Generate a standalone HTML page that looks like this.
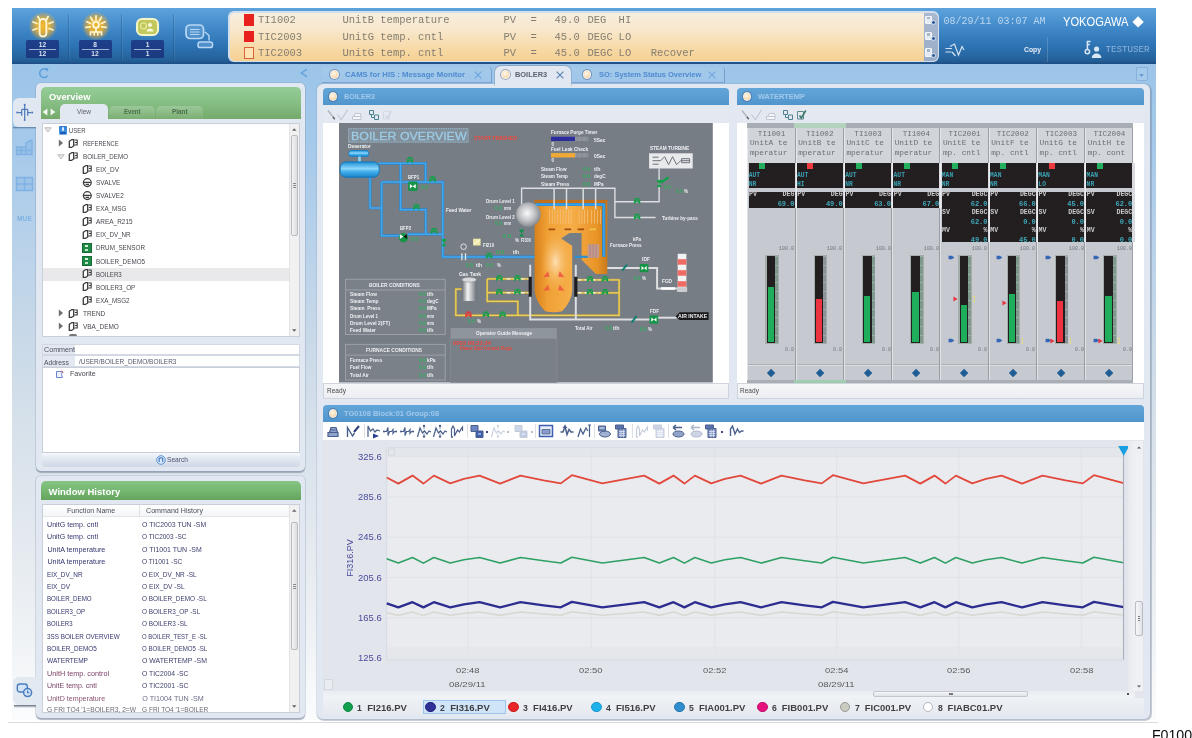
<!DOCTYPE html>
<html lang="en"><head><meta charset="utf-8"><title>CENTUM VP HIS</title>
<style>
html,body{margin:0;padding:0;background:#fff;}
#app{will-change:transform;position:relative;width:1192px;height:738px;overflow:hidden;background:#fff;font-family:"Liberation Sans",sans-serif;}
#app div,#app span.t,#app svg{position:absolute;box-sizing:border-box;}
#shot{left:0;top:0;width:1192px;height:738px;}
#app span.t{white-space:pre;transform-origin:0 50%;}
.s{font-family:"Liberation Sans",sans-serif;}
.sb{font-family:"Liberation Sans",sans-serif;font-weight:bold;}
.m{font-family:"Liberation Mono",monospace;}
.mb{font-family:"Liberation Mono",monospace;font-weight:bold;}
.r{font-family:"Liberation Serif",serif;}
.rb{font-family:"Liberation Serif",serif;font-weight:bold;}
</style></head>
<body><div id="app">
<div id="shot">
<!-- p1_frame -->
<div style="left:12px;top:63px;width:1144px;height:657px;background:linear-gradient(#9cc5e9 0%,#a5c9ea 12%,#b9d2ea 28%,#c9d9e8 42%,#d8e2eb 57%,#e3e9ef 72%,#eff2f5 87%,#fbfcfd 100%);"></div>
<div style="left:12px;top:8px;width:1144px;height:55.5px;background:linear-gradient(#5ea3dc 0%,#4189c9 35%,#2f75b5 65%,#26659f 88%,#225a92 96%,#1d4c80 100%);"></div>
<!-- p2_header -->
<div style="left:68px;top:14px;width:1px;height:46px;background:rgba(20,60,110,.28);"></div>
<div style="left:69px;top:14px;width:1px;height:46px;background:rgba(255,255,255,.07);"></div>
<div style="left:120.5px;top:14px;width:1px;height:46px;background:rgba(20,60,110,.28);"></div>
<div style="left:121.5px;top:14px;width:1px;height:46px;background:rgba(255,255,255,.07);"></div>
<div style="left:173px;top:14px;width:1px;height:46px;background:rgba(20,60,110,.28);"></div>
<div style="left:174px;top:14px;width:1px;height:46px;background:rgba(255,255,255,.07);"></div>
<div style="left:29px;top:12px;width:28px;height:28px;background:radial-gradient(circle,rgba(250,190,40,.95) 0%,rgba(245,178,35,.85) 35%,rgba(235,170,50,.4) 58%,rgba(235,170,50,0) 74%);border-radius:50%;"></div><svg style="left:28px;top:10.5px" width="30" height="30" viewBox="-15 -15 30 30"><path d="M-6.1 -2.5L-10.0 -4.0M-3.1 -5.8L-5.1 -9.5M3.1 -5.8L5.1 -9.5M6.1 -2.5L10.0 -4.0M6.1 2.5L10.0 4.0M-6.1 2.5L-10.0 4.0" stroke="#fff3c4" stroke-width="1.8" stroke-linecap="round" fill="none"/><rect x="-3.4" y="-7" width="6.8" height="17.4" rx="3.2" fill="none" stroke="#fff6d8" stroke-width="1.900"/></svg>
<div style="left:26px;top:40px;width:33px;height:18.2px;background:linear-gradient(#1e3f8a,#1b3a80);border-radius:1.5px;"></div><div style="left:29px;top:48.6px;width:27px;height:1px;background:rgba(200,215,240,.75);"></div><span class="t sb" style="left:38.83px;top:40.74px;font-size:6.6px;line-height:7.92px;color:#dbe3f5;">12</span><span class="t sb" style="left:38.83px;top:49.74px;font-size:6.6px;line-height:7.92px;color:#dbe3f5;">12</span>
<div style="left:81.5px;top:12px;width:28px;height:28px;background:radial-gradient(circle,rgba(250,190,40,.95) 0%,rgba(245,178,35,.85) 35%,rgba(235,170,50,.4) 58%,rgba(235,170,50,0) 74%);border-radius:50%;"></div><svg style="left:80.5px;top:10.5px" width="30" height="30" viewBox="-15 -15 30 30"><path d="M-5.3 -2.5L-9.2 -4.3M-3.1 -4.9L-5.4 -8.7M0.0 -5.8L0.0 -10.2M3.1 -4.9L5.4 -8.7M5.3 -2.5L9.2 -4.3M5.7 0.8L10.1 1.4M-5.7 0.8L-10.1 1.4" stroke="#fff3c4" stroke-width="1.8" stroke-linecap="round" fill="none"/><circle cx="0" cy="-1.2" r="3" fill="none" stroke="#fff6d8" stroke-width="1.8"/><path d="M-5.5 9.5V6H5.5V9.500M-1.800 9.500V6M1.800 9.500V6M0 2v3.500" fill="none" stroke="#fff6d8" stroke-width="1.6"/></svg>
<div style="left:78.5px;top:40px;width:33px;height:18.2px;background:linear-gradient(#1e3f8a,#1b3a80);border-radius:1.5px;"></div><div style="left:81.5px;top:48.6px;width:27px;height:1px;background:rgba(200,215,240,.75);"></div><span class="t sb" style="left:93.16px;top:40.74px;font-size:6.6px;line-height:7.92px;color:#dbe3f5;">8</span><span class="t sb" style="left:91.33px;top:49.74px;font-size:6.6px;line-height:7.92px;color:#dbe3f5;">12</span>
<div style="left:133.5px;top:15.5px;width:27.5px;height:22.5px;background:radial-gradient(closest-side,rgba(240,245,170,.55),rgba(240,245,170,0));"></div>
<div style="left:136px;top:17.6px;width:22.6px;height:18.2px;background:#c3c85c;border:2px solid #f3f5c9;border-radius:6px;"></div>
<svg style="left:139px;top:20px" width="17" height="14" viewBox="0 0 17 14"><circle cx="4.5" cy="6" r="3" fill="none" stroke="#e9eea0" stroke-width="1.2"/><circle cx="11" cy="5" r="2" fill="#f6f8d8"/><path d="M7.5 11.5c0-4 7-4 7 0z" fill="#f6f8d8"/></svg>
<div style="left:131px;top:40px;width:33px;height:18.2px;background:linear-gradient(#1e3f8a,#1b3a80);border-radius:1.5px;"></div><div style="left:134px;top:48.6px;width:27px;height:1px;background:rgba(200,215,240,.75);"></div><span class="t sb" style="left:145.66px;top:40.74px;font-size:6.6px;line-height:7.92px;color:#dbe3f5;">1</span><span class="t sb" style="left:145.66px;top:49.74px;font-size:6.6px;line-height:7.92px;color:#dbe3f5;">1</span>
<svg style="left:183px;top:22px" width="34" height="30" viewBox="0 0 34 30"><rect x="3" y="3" width="17.5" height="13.5" rx="4" fill="rgba(150,195,240,.25)" stroke="#b9d6f4" stroke-width="1.7"/><path d="M7 7.5h9.5M7 10h9.5M7 12.5h9.5" stroke="#b9d6f4" stroke-width="1.2"/><rect x="15" y="20" width="14.5" height="5.6" rx="2.2" fill="rgba(150,195,240,.35)" stroke="#b9d6f4" stroke-width="1.5"/><path d="M22 10l4 3.5v5" fill="none" stroke="#b9d6f4" stroke-width="1.4"/></svg>
<div style="left:228.3px;top:11.3px;width:711.2px;height:50.4px;background:#d3dfec;border-radius:6px;"></div>
<div style="left:229.5px;top:12.5px;width:694.5px;height:48px;background:linear-gradient(#f7eee0 0%,#f8e6c8 40%,#f7d9a6 75%,#f6d092 100%);border-radius:5px 0 0 5px;"></div>
<div style="left:923.6px;top:12.5px;width:14.9px;height:48px;background:linear-gradient(#a9b9cf,#9aaec8);border-radius:0 5px 5px 0;"></div>
<div style="left:244px;top:14.3px;width:10.2px;height:11.6px;background:#e8211f;"></div>
<span class="t m" style="left:258px;top:13.9px;font-size:10.5px;line-height:12.6px;color:#857e71;">TI1002</span>
<span class="t m" style="left:342.5px;top:13.9px;font-size:10.5px;line-height:12.6px;color:#857e71;">UnitB temperature</span>
<span class="t m" style="left:503.5px;top:13.9px;font-size:10.5px;line-height:12.6px;color:#857e71;">PV</span>
<span class="t m" style="left:530.5px;top:13.9px;font-size:10.5px;line-height:12.6px;color:#857e71;">=</span>
<span class="t m" style="left:554.5px;top:13.9px;font-size:10.5px;line-height:12.6px;color:#857e71;">49.0</span>
<span class="t m" style="left:587.5px;top:13.9px;font-size:10.5px;line-height:12.6px;color:#857e71;">DEG</span>
<span class="t m" style="left:618.6px;top:13.9px;font-size:10.5px;line-height:12.6px;color:#857e71;">HI</span>
<div style="left:244px;top:30.7px;width:10.2px;height:11.6px;background:#e8211f;"></div>
<span class="t m" style="left:258px;top:31.2px;font-size:10.5px;line-height:12.6px;color:#857e71;">TIC2003</span>
<span class="t m" style="left:342.5px;top:31.2px;font-size:10.5px;line-height:12.6px;color:#857e71;">UnitG temp. cntl</span>
<span class="t m" style="left:503.5px;top:31.2px;font-size:10.5px;line-height:12.6px;color:#857e71;">PV</span>
<span class="t m" style="left:530.5px;top:31.2px;font-size:10.5px;line-height:12.6px;color:#857e71;">=</span>
<span class="t m" style="left:554.5px;top:31.2px;font-size:10.5px;line-height:12.6px;color:#857e71;">45.0</span>
<span class="t m" style="left:587.5px;top:31.2px;font-size:10.5px;line-height:12.6px;color:#857e71;">DEGC</span>
<span class="t m" style="left:618.6px;top:31.2px;font-size:10.5px;line-height:12.6px;color:#857e71;">LO</span>
<div style="left:244px;top:47px;width:10.2px;height:12px;background:#fbe3b4;border:1px solid #d9613a;"></div>
<span class="t m" style="left:258px;top:46.7px;font-size:10.5px;line-height:12.6px;color:#857e71;">TIC2003</span>
<span class="t m" style="left:342.5px;top:46.7px;font-size:10.5px;line-height:12.6px;color:#857e71;">UnitG temp. cntl</span>
<span class="t m" style="left:503.5px;top:46.7px;font-size:10.5px;line-height:12.6px;color:#857e71;">PV</span>
<span class="t m" style="left:530.5px;top:46.7px;font-size:10.5px;line-height:12.6px;color:#857e71;">=</span>
<span class="t m" style="left:554.5px;top:46.7px;font-size:10.5px;line-height:12.6px;color:#857e71;">45.0</span>
<span class="t m" style="left:587.5px;top:46.7px;font-size:10.5px;line-height:12.6px;color:#857e71;">DEGC</span>
<span class="t m" style="left:618.6px;top:46.7px;font-size:10.5px;line-height:12.6px;color:#857e71;">LO</span>
<span class="t m" style="left:650.8px;top:46.7px;font-size:10.5px;line-height:12.6px;color:#857e71;">Recover</span>
<div style="left:925.4px;top:15.5px;width:6.2px;height:8.6px;background:rgba(240,244,250,.85);border:1px solid #f3f6fa;border-radius:1px;"></div>
<div style="left:926.6px;top:16.9px;width:3.6px;height:2.6px;background:rgba(120,140,170,.55);"></div>
<div style="left:931.3px;top:20.1px;width:5.2px;height:5.2px;background:#2f5f9c;border:1px solid #d5dfec;border-radius:50%;"></div>
<div style="left:925.4px;top:31.6px;width:6.2px;height:8.6px;background:rgba(240,244,250,.85);border:1px solid #f3f6fa;border-radius:1px;"></div>
<div style="left:926.6px;top:33px;width:3.6px;height:2.6px;background:rgba(120,140,170,.55);"></div>
<div style="left:931.3px;top:36.2px;width:5.2px;height:5.2px;background:#2f5f9c;border:1px solid #d5dfec;border-radius:50%;"></div>
<div style="left:925.4px;top:48px;width:6.2px;height:8.6px;background:rgba(240,244,250,.85);border:1px solid #f3f6fa;border-radius:1px;"></div>
<div style="left:926.6px;top:49.4px;width:3.6px;height:2.6px;background:rgba(120,140,170,.55);"></div>
<div style="left:931.3px;top:52.6px;width:5.2px;height:5.2px;background:#2f5f9c;border:1px solid #d5dfec;border-radius:50%;"></div>
<span class="t m" style="left:943.4px;top:15.6px;font-size:10px;line-height:12px;color:#bdd6f0;">08/29/11 03:07 AM</span>
<svg style="left:943px;top:41px" width="24" height="18" viewBox="0 0 24 18"><path d="M2.500 7.500h6.500M2.500 11h6M7 5.500l4.500-2.500 4 11 3.500-8.500 2 3.500M9 11l3.500 4" fill="none" stroke="#d3e2f3" stroke-width="1.200"/></svg>
<span class="t sb" style="left:1024px;top:45px;font-size:8px;line-height:9.6px;color:#e6eef8;transform:scaleX(0.85);">Copy</span>
<div style="left:1046.5px;top:37px;width:1px;height:25px;background:rgba(255,255,255,.16);"></div>
<span class="t s" style="left:1062.7px;top:14.76px;font-size:12.4px;line-height:14.88px;color:#fff;transform:scaleX(0.9);">YOKOGAWA</span>
<div style="left:1134.4px;top:18.3px;width:8.2px;height:8.2px;background:#fff;transform:rotate(45deg);"></div>
<svg style="left:1083px;top:40px" width="20" height="19" viewBox="0 0 20 19"><circle cx="4.4" cy="11.6" r="2.2" fill="none" stroke="#d9e6f5" stroke-width="1.5"/><path d="M4.4 9.4V1.6h3.2M4.4 4.6h2.4" fill="none" stroke="#d9e6f5" stroke-width="1.5"/><circle cx="13.6" cy="9" r="2.6" fill="#d9e6f5"/><path d="M8.8 18c0-6 9.6-6 9.6 0z" fill="#d9e6f5"/></svg>
<span class="t m" style="left:1105.5px;top:44.28px;font-size:9.2px;line-height:11.04px;color:#8db2da;">TESTUSER</span>
<!-- p3_left -->
<div style="left:13px;top:126.6px;width:23px;height:2.6px;background:linear-gradient(rgba(60,90,130,.75),rgba(70,100,140,0));"></div>
<div style="left:13.6px;top:705.4px;width:22px;height:3px;background:linear-gradient(rgba(70,80,100,.85),rgba(80,95,120,.25) 70%,rgba(90,110,140,0));"></div>
<svg style="left:38px;top:67px" width="12" height="12" viewBox="0 0 12 12"><path d="M9.6 8.6A4.3 4.3 0 1 1 8.4 2.7" fill="none" stroke="#5f9fdb" stroke-width="1.6"/><path d="M6.6 1l4 .3-1.3 3.5z" fill="#5f9fdb"/></svg>
<svg style="left:299px;top:67px" width="10" height="12" viewBox="0 0 10 12"><path d="M8 2.200L2.200 6l5.800 3.800" fill="none" stroke="#68a4de" stroke-width="1.500"/></svg>
<div style="left:35.6px;top:82.5px;width:269.8px;height:388px;background:#e2e8f1;border-radius:5px;box-shadow:0 0 0 1px rgba(120,140,170,.22),0 1.5px 1px rgba(100,112,135,.5);"></div>
<div style="left:12.6px;top:97.6px;width:26px;height:29.2px;background:#e2e8f1;border-radius:6px 0 0 6px;"></div>
<div style="left:41px;top:87px;width:259.6px;height:31.6px;background:linear-gradient(#94cd96 0%,#89c188 40%,#7db478 75%,#76aa6b 100%);border-radius:5px 5px 0 0;"></div>
<span class="t sb" style="left:48.5px;top:90.6px;font-size:9.5px;line-height:11.4px;color:#fff;transform:scaleX(0.98);">Overview</span>
<div style="left:108.5px;top:105.5px;width:46.6px;height:13.5px;background:linear-gradient(rgba(255,255,255,.2),rgba(255,255,255,.05));border-radius:5px 5px 0 0;"></div>
<div style="left:156.2px;top:105.5px;width:47.2px;height:13.5px;background:linear-gradient(rgba(255,255,255,.2),rgba(255,255,255,.05));border-radius:5px 5px 0 0;"></div>
<div style="left:60px;top:104px;width:47.6px;height:15px;background:#e2e8f1;border-radius:5px 5px 0 0;"></div>
<svg style="left:42px;top:107.8px" width="6" height="8" viewBox="0 0 6 8"><path d="M5.4 .4v7.2L.6 4z" fill="#f4faf2"/></svg>
<svg style="left:49.8px;top:107.8px" width="6" height="8" viewBox="0 0 6 8"><path d="M.6 .4v7.2L5.4 4z" fill="#f4faf2"/></svg>
<span class="t s" style="left:77px;top:107.5px;font-size:7px;line-height:8.4px;color:#5a5f6a;transform:scaleX(0.93);">View</span>
<span class="t sb" style="left:123.75px;top:107.5px;font-size:7px;line-height:8.4px;color:#3d5f3e;transform:scaleX(0.87);opacity:0.85;">Event</span>
<span class="t sb" style="left:171.75px;top:107.5px;font-size:7px;line-height:8.4px;color:#3d5f3e;transform:scaleX(0.91);opacity:0.85;">Plant</span>
<div style="left:41.6px;top:122.6px;width:258.2px;height:214.8px;background:#fff;border:1px solid #c9cfd8;"></div>
<div style="left:42.6px;top:268.4px;width:246.6px;height:12.9px;background:#e9e9eb;"></div>
<svg style="left:44px;top:127.4px" width="8" height="6" viewBox="0 0 8 6"><path d="M.8 .8h6.4L4 5z" fill="#e9e9e9" stroke="#b4b4b4" stroke-width=".9"/></svg>
<div style="left:58.7px;top:125.8px;width:8.6px;height:9.6px;background:linear-gradient(#2f7fd6,#3f8fe0 60%,#78b4ee);border-radius:1px;"></div><div style="left:61.7px;top:127px;width:2.8px;height:3.6px;background:#dfeeff;border-radius:1px;"></div><div style="left:59.7px;top:132.4px;width:6.6px;height:1.6px;background:#1d5cb0;"></div>
<span class="t s" style="left:69.4px;top:125.84px;font-size:7.6px;line-height:9.12px;color:#4b4650;transform:scaleX(0.78);">USER</span>
<svg style="left:57.6px;top:139.47px" width="6" height="8" viewBox="0 0 6 8"><path d="M.8 .6v6.8L5 4z" fill="#6e6e6e"/></svg>
<svg style="left:67.8px;top:137.67px" width="11" height="10" viewBox="0 0 11 11" preserveAspectRatio="none"><path d="M1.3 3.6l2.6-1.9h1.8v7l-2.2 1.6H1.3z" fill="#fff" stroke="#3b3b3b" stroke-width="1.300"/><path d="M6.6 2.2h2.6v5.6H6.2M7 5h2.6" fill="none" stroke="#3b3b3b" stroke-width="1.1"/></svg>
<span class="t s" style="left:82.9px;top:138.91px;font-size:7.6px;line-height:9.12px;color:#4b4650;transform:scaleX(0.76);">REFERENCE</span>
<svg style="left:56.6px;top:153.54px" width="8" height="6" viewBox="0 0 8 6"><path d="M.8 .8h6.4L4 5z" fill="#e9e9e9" stroke="#b4b4b4" stroke-width=".9"/></svg>
<svg style="left:67.8px;top:150.74px" width="11" height="10" viewBox="0 0 11 11" preserveAspectRatio="none"><path d="M1.3 3.6l2.6-1.9h1.8v7l-2.2 1.6H1.3z" fill="#fff" stroke="#3b3b3b" stroke-width="1.300"/><path d="M6.6 2.2h2.6v5.6H6.2M7 5h2.6" fill="none" stroke="#3b3b3b" stroke-width="1.1"/></svg>
<span class="t s" style="left:82.9px;top:151.98px;font-size:7.6px;line-height:9.12px;color:#4b4650;transform:scaleX(0.82);">BOILER_DEMO</span>
<svg style="left:81.5px;top:163.81px" width="11" height="10" viewBox="0 0 11 11" preserveAspectRatio="none"><path d="M1.3 3.6l2.6-1.9h1.8v7l-2.2 1.6H1.3z" fill="#fff" stroke="#3b3b3b" stroke-width="1.300"/><path d="M6.6 2.2h2.6v5.6H6.2M7 5h2.6" fill="none" stroke="#3b3b3b" stroke-width="1.1"/></svg>
<span class="t s" style="left:95.6px;top:165.05px;font-size:7.6px;line-height:9.12px;color:#4b4650;transform:scaleX(0.85);">EIX_DV</span>
<svg style="left:81.5px;top:177.08px" width="11" height="11" viewBox="0 0 11 11"><circle cx="5.3" cy="5.6" r="3.9" fill="#fff" stroke="#3b3b3b" stroke-width="1.3"/><path d="M2 5.3h6.6M3.6 7.3h3.4" stroke="#3b3b3b" stroke-width="1.2"/></svg>
<span class="t s" style="left:95.6px;top:178.12px;font-size:7.6px;line-height:9.12px;color:#4b4650;transform:scaleX(0.86);">SVALVE</span>
<svg style="left:81.5px;top:190.15px" width="11" height="11" viewBox="0 0 11 11"><circle cx="5.3" cy="5.6" r="3.9" fill="#fff" stroke="#3b3b3b" stroke-width="1.3"/><path d="M2 5.3h6.6M3.6 7.3h3.4" stroke="#3b3b3b" stroke-width="1.2"/></svg>
<span class="t s" style="left:95.6px;top:191.19px;font-size:7.6px;line-height:9.12px;color:#4b4650;transform:scaleX(0.85);">SVALVE2</span>
<svg style="left:81.5px;top:203.02px" width="11" height="10" viewBox="0 0 11 11" preserveAspectRatio="none"><path d="M1.3 3.6l2.6-1.9h1.8v7l-2.2 1.6H1.3z" fill="#fff" stroke="#3b3b3b" stroke-width="1.300"/><path d="M6.6 2.2h2.6v5.6H6.2M7 5h2.6" fill="none" stroke="#3b3b3b" stroke-width="1.1"/></svg>
<span class="t s" style="left:95.6px;top:204.26px;font-size:7.6px;line-height:9.12px;color:#4b4650;transform:scaleX(0.83);">EXA_MSG</span>
<svg style="left:81.5px;top:216.09px" width="11" height="10" viewBox="0 0 11 11" preserveAspectRatio="none"><path d="M1.3 3.6l2.6-1.9h1.8v7l-2.2 1.6H1.3z" fill="#fff" stroke="#3b3b3b" stroke-width="1.300"/><path d="M6.6 2.2h2.6v5.6H6.2M7 5h2.6" fill="none" stroke="#3b3b3b" stroke-width="1.1"/></svg>
<span class="t s" style="left:95.6px;top:217.33px;font-size:7.6px;line-height:9.12px;color:#4b4650;transform:scaleX(0.85);">AREA_R215</span>
<svg style="left:81.5px;top:229.16px" width="11" height="10" viewBox="0 0 11 11" preserveAspectRatio="none"><path d="M1.3 3.6l2.6-1.9h1.8v7l-2.2 1.6H1.3z" fill="#fff" stroke="#3b3b3b" stroke-width="1.300"/><path d="M6.6 2.2h2.6v5.6H6.2M7 5h2.6" fill="none" stroke="#3b3b3b" stroke-width="1.1"/></svg>
<span class="t s" style="left:95.6px;top:230.4px;font-size:7.6px;line-height:9.12px;color:#4b4650;transform:scaleX(0.82);">EIX_DV_NR</span>
<div style="left:82px;top:243.23px;width:9.6px;height:9.6px;background:#1f8a45;border:1px solid #176b36;"></div><div style="left:85px;top:245.23px;width:3.2px;height:2px;background:#d7f0dc;"></div><div style="left:85px;top:248.73px;width:3.2px;height:2px;background:#bfe6c8;"></div>
<span class="t s" style="left:95.6px;top:243.47px;font-size:7.6px;line-height:9.12px;color:#4b4650;transform:scaleX(0.83);">DRUM_SENSOR</span>
<div style="left:82px;top:256.3px;width:9.6px;height:9.6px;background:#1f8a45;border:1px solid #176b36;"></div><div style="left:85px;top:258.3px;width:3.2px;height:2px;background:#d7f0dc;"></div><div style="left:85px;top:261.8px;width:3.2px;height:2px;background:#bfe6c8;"></div>
<span class="t s" style="left:95.6px;top:256.54px;font-size:7.6px;line-height:9.12px;color:#4b4650;transform:scaleX(0.83);">BOILER_DEMO5</span>
<svg style="left:81.5px;top:268.37px" width="11" height="10" viewBox="0 0 11 11" preserveAspectRatio="none"><path d="M1.3 3.6l2.6-1.9h1.8v7l-2.2 1.6H1.3z" fill="#fff" stroke="#3b3b3b" stroke-width="1.300"/><path d="M6.6 2.2h2.6v5.6H6.2M7 5h2.6" fill="none" stroke="#3b3b3b" stroke-width="1.1"/></svg>
<span class="t s" style="left:95.6px;top:269.61px;font-size:7.6px;line-height:9.12px;color:#4b4650;transform:scaleX(0.8);">BOILER3</span>
<svg style="left:81.5px;top:281.44px" width="11" height="10" viewBox="0 0 11 11" preserveAspectRatio="none"><path d="M1.3 3.6l2.6-1.9h1.8v7l-2.2 1.6H1.3z" fill="#fff" stroke="#3b3b3b" stroke-width="1.300"/><path d="M6.6 2.2h2.6v5.6H6.2M7 5h2.6" fill="none" stroke="#3b3b3b" stroke-width="1.1"/></svg>
<span class="t s" style="left:95.6px;top:282.68px;font-size:7.6px;line-height:9.12px;color:#4b4650;transform:scaleX(0.83);">BOILER3_OP</span>
<svg style="left:81.5px;top:294.51px" width="11" height="10" viewBox="0 0 11 11" preserveAspectRatio="none"><path d="M1.3 3.6l2.6-1.9h1.8v7l-2.2 1.6H1.3z" fill="#fff" stroke="#3b3b3b" stroke-width="1.300"/><path d="M6.6 2.2h2.6v5.6H6.2M7 5h2.6" fill="none" stroke="#3b3b3b" stroke-width="1.1"/></svg>
<span class="t s" style="left:95.6px;top:295.75px;font-size:7.6px;line-height:9.12px;color:#4b4650;transform:scaleX(0.82);">EXA_MSG2</span>
<svg style="left:57.6px;top:309.38px" width="6" height="8" viewBox="0 0 6 8"><path d="M.8 .6v6.8L5 4z" fill="#6e6e6e"/></svg>
<svg style="left:67.8px;top:307.58px" width="11" height="10" viewBox="0 0 11 11" preserveAspectRatio="none"><path d="M1.3 3.6l2.6-1.9h1.8v7l-2.2 1.6H1.3z" fill="#fff" stroke="#3b3b3b" stroke-width="1.300"/><path d="M6.6 2.2h2.6v5.6H6.2M7 5h2.6" fill="none" stroke="#3b3b3b" stroke-width="1.1"/></svg>
<span class="t s" style="left:82.9px;top:308.82px;font-size:7.6px;line-height:9.12px;color:#4b4650;transform:scaleX(0.85);">TREND</span>
<svg style="left:57.6px;top:322.45px" width="6" height="8" viewBox="0 0 6 8"><path d="M.8 .6v6.8L5 4z" fill="#6e6e6e"/></svg>
<svg style="left:67.8px;top:320.65px" width="11" height="10" viewBox="0 0 11 11" preserveAspectRatio="none"><path d="M1.3 3.6l2.6-1.9h1.8v7l-2.2 1.6H1.3z" fill="#fff" stroke="#3b3b3b" stroke-width="1.300"/><path d="M6.6 2.2h2.6v5.6H6.2M7 5h2.6" fill="none" stroke="#3b3b3b" stroke-width="1.1"/></svg>
<span class="t s" style="left:82.9px;top:321.89px;font-size:7.6px;line-height:9.12px;color:#4b4650;transform:scaleX(0.85);">VBA_DEMO</span>
<div style="left:68.6px;top:334px;width:8px;height:2px;background:#777;border-radius:2px 2px 0 0;"></div>
<div style="left:289.2px;top:123.6px;width:10px;height:212px;background:#f1f1f2;border-left:1px solid #e3e3e5;"></div><div style="left:290.7px;top:134.5px;width:7px;height:101.5px;background:linear-gradient(90deg,#f3f3f4,#dcdde0);border:1px solid #b9bbc0;border-radius:2px;"></div><div style="left:292.6px;top:182.75px;width:3.2px;height:5px;background:repeating-linear-gradient(#8a8a8a 0 1px,transparent 1px 2px);"></div><svg style="left:292px;top:127.6px" width="4.500" height="3" viewBox="0 0 6 4"><path d="M0 3.6L3 .4l3 3.2z" fill="#666"/></svg><svg style="left:292px;top:328.6px" width="4.500" height="3" viewBox="0 0 6 4"><path d="M0 .4L3 3.6 6 .4z" fill="#666"/></svg>
<div style="left:41.6px;top:343.8px;width:258.2px;height:11.6px;background:#fff;border:1px solid #d3d9e2;"></div>
<div style="left:41.6px;top:355.4px;width:258.2px;height:12px;background:#fff;border:1px solid #d3d9e2;"></div>
<div style="left:42.6px;top:344.8px;width:32.4px;height:9.6px;background:#e4e9f1;"></div>
<div style="left:42.6px;top:356.4px;width:32.4px;height:10px;background:#e4e9f1;"></div>
<span class="t s" style="left:43.5px;top:346.2px;font-size:7px;line-height:8.4px;color:#4a5060;transform:scaleX(1.02);">Comment</span>
<span class="t s" style="left:43.5px;top:358.6px;font-size:7px;line-height:8.4px;color:#4a5060;transform:scaleX(0.97);">Address</span>
<span class="t s" style="left:79px;top:358.48px;font-size:7.2px;line-height:8.64px;color:#55596a;transform:scaleX(0.9);">/USER/BOILER_DEMO/BOILER3</span>
<div style="left:41.6px;top:367.2px;width:258.2px;height:86px;background:#fff;border:1px solid #c9cfd8;"></div>
<svg style="left:55px;top:369.500px" width="10" height="10" viewBox="0 0 10 10"><path d="M1.5 1.5h6l-1 3 1 3h-6z" fill="#eef3ff" stroke="#6a86d0" stroke-width="1"/><path d="M6.2 1l2.2 1.6" stroke="#d05050" stroke-width="1"/></svg>
<span class="t s" style="left:69.6px;top:370.28px;font-size:7.2px;line-height:8.64px;color:#4b4650;transform:scaleX(0.99);">Favorite</span>
<div style="left:41.6px;top:453.4px;width:258.2px;height:13.4px;background:linear-gradient(#f4f7fb,#dde4ee 55%,#cfd8e5);border-radius:0 0 4px 4px;"></div>
<svg style="left:155.5px;top:455px" width="10" height="10" viewBox="0 0 10 10"><circle cx="5" cy="5" r="4.3" fill="#d7e8fb" stroke="#5b93d6" stroke-width="1"/><path d="M3.2 3v4M6.8 3v4M3.2 3h3.6" fill="none" stroke="#2f68b4" stroke-width="1"/></svg>
<span class="t s" style="left:167px;top:455.98px;font-size:7.2px;line-height:8.64px;color:#4a5570;transform:scaleX(0.92);">Search</span>
<div style="left:35.6px;top:476px;width:269.8px;height:242.2px;background:#e2e8f1;border-radius:5px;box-shadow:0 0 0 1px rgba(120,140,170,.22),0 1.5px 1px rgba(100,112,135,.5);"></div>
<div style="left:12.6px;top:677px;width:26px;height:28.4px;background:#e3e9f1;border-radius:6px 0 0 6px;"></div>
<div style="left:41px;top:481px;width:259.6px;height:19.4px;background:linear-gradient(#86c585 0%,#76b772 50%,#64a45c 100%);border-radius:5px 5px 0 0;"></div>
<span class="t sb" style="left:48.5px;top:485.9px;font-size:9.5px;line-height:11.4px;color:#fff;">Window History</span>
<div style="left:41.6px;top:504px;width:258.2px;height:209px;background:#fff;border:1px solid #c9cfd8;"></div>
<div style="left:42.6px;top:505px;width:246.6px;height:11.6px;background:linear-gradient(#fff,#f4f5f7);border-bottom:1px solid #e4e6ea;"></div>
<div style="left:138.6px;top:505px;width:1px;height:11.6px;background:#dfe1e6;"></div>
<span class="t s" style="left:66.55px;top:506.88px;font-size:7.2px;line-height:8.64px;color:#4a4f5c;transform:scaleX(0.99);">Function Name</span>
<span class="t s" style="left:145.5px;top:506.88px;font-size:7.2px;line-height:8.64px;color:#4a4f5c;transform:scaleX(0.99);">Command History</span>
<span class="t s" style="left:47.4px;top:520.88px;font-size:7.2px;line-height:8.64px;color:#34356f;transform:scaleX(0.99);">UnitG temp. cntl</span>
<span class="t s" style="left:142.2px;top:520.88px;font-size:7.2px;line-height:8.64px;color:#3b3d6c;transform:scaleX(0.96);">O TIC2003 TUN -SM</span>
<span class="t s" style="left:47.4px;top:533.29px;font-size:7.2px;line-height:8.64px;color:#34356f;transform:scaleX(0.99);">UnitG temp. cntl</span>
<span class="t s" style="left:142.2px;top:533.29px;font-size:7.2px;line-height:8.64px;color:#3b3d6c;transform:scaleX(0.9);">O TIC2003 -SC</span>
<span class="t s" style="left:47.4px;top:545.7px;font-size:7.2px;line-height:8.64px;color:#34356f;">UnitA temperature</span>
<span class="t s" style="left:142.2px;top:545.7px;font-size:7.2px;line-height:8.64px;color:#3b3d6c;transform:scaleX(0.97);">O TI1001 TUN -SM</span>
<span class="t s" style="left:47.4px;top:558.11px;font-size:7.2px;line-height:8.64px;color:#34356f;">UnitA temperature</span>
<span class="t s" style="left:142.2px;top:558.11px;font-size:7.2px;line-height:8.64px;color:#3b3d6c;transform:scaleX(0.91);">O TI1001 -SC</span>
<span class="t s" style="left:47.4px;top:570.52px;font-size:7.2px;line-height:8.64px;color:#34356f;transform:scaleX(0.89);">EIX_DV_NR</span>
<span class="t s" style="left:142.2px;top:570.52px;font-size:7.2px;line-height:8.64px;color:#3b3d6c;transform:scaleX(0.9);">O EIX_DV_NR -SL</span>
<span class="t s" style="left:47.4px;top:582.93px;font-size:7.2px;line-height:8.64px;color:#34356f;transform:scaleX(0.9);">EIX_DV</span>
<span class="t s" style="left:142.2px;top:582.93px;font-size:7.2px;line-height:8.64px;color:#3b3d6c;transform:scaleX(0.92);">O EIX_DV -SL</span>
<span class="t s" style="left:47.4px;top:595.34px;font-size:7.2px;line-height:8.64px;color:#34356f;transform:scaleX(0.86);">BOILER_DEMO</span>
<span class="t s" style="left:142.2px;top:595.34px;font-size:7.2px;line-height:8.64px;color:#3b3d6c;transform:scaleX(0.89);">O BOILER_DEMO -SL</span>
<span class="t s" style="left:47.4px;top:607.75px;font-size:7.2px;line-height:8.64px;color:#34356f;transform:scaleX(0.85);">BOILER3_OP</span>
<span class="t s" style="left:142.2px;top:607.75px;font-size:7.2px;line-height:8.64px;color:#3b3d6c;transform:scaleX(0.89);">O BOILER3_OP -SL</span>
<span class="t s" style="left:47.4px;top:620.16px;font-size:7.2px;line-height:8.64px;color:#34356f;transform:scaleX(0.84);">BOILER3</span>
<span class="t s" style="left:142.2px;top:620.16px;font-size:7.2px;line-height:8.64px;color:#3b3d6c;transform:scaleX(0.89);">O BOILER3 -SL</span>
<span class="t s" style="left:47.4px;top:632.57px;font-size:7.2px;line-height:8.64px;color:#34356f;transform:scaleX(0.88);">3SS BOILER OVERVIEW</span>
<span class="t s" style="left:142.2px;top:632.57px;font-size:7.2px;line-height:8.64px;color:#3b3d6c;transform:scaleX(0.83);">O BOILER_TEST_E -SL</span>
<span class="t s" style="left:47.4px;top:644.98px;font-size:7.2px;line-height:8.64px;color:#34356f;transform:scaleX(0.89);">BOILER_DEMO5</span>
<span class="t s" style="left:142.2px;top:644.98px;font-size:7.2px;line-height:8.64px;color:#3b3d6c;transform:scaleX(0.85);">O BOILER_DEMO5 -SL</span>
<span class="t s" style="left:47.4px;top:657.39px;font-size:7.2px;line-height:8.64px;color:#34356f;transform:scaleX(0.91);">WATERTEMP</span>
<span class="t s" style="left:142.2px;top:657.39px;font-size:7.2px;line-height:8.64px;color:#3b3d6c;transform:scaleX(0.96);">O WATERTEMP -SM</span>
<span class="t s" style="left:47.4px;top:669.8px;font-size:7.2px;line-height:8.64px;color:#7a4068;transform:scaleX(1.01);">UnitH temp. control</span>
<span class="t s" style="left:142.2px;top:669.8px;font-size:7.2px;line-height:8.64px;color:#3b3d6c;transform:scaleX(0.94);">O TIC2004 -SC</span>
<span class="t s" style="left:47.4px;top:682.21px;font-size:7.2px;line-height:8.64px;color:#7a4068;transform:scaleX(0.98);">UnitE temp. cntl</span>
<span class="t s" style="left:142.2px;top:682.21px;font-size:7.2px;line-height:8.64px;color:#3b3d6c;transform:scaleX(0.94);">O TIC2001 -SC</span>
<span class="t s" style="left:47.4px;top:694.62px;font-size:7.2px;line-height:8.64px;color:#8a5070;transform:scaleX(0.99);">UnitD temperature</span>
<span class="t s" style="left:142.2px;top:694.62px;font-size:7.2px;line-height:8.64px;color:#6a6c88;">O TI1004 TUN -SM</span>
<div style="left:42.6px;top:705px;width:246px;height:7.8px;overflow:hidden;"><span class="t s" style="left:4.8px;top:1.28px;font-size:7.2px;line-height:8.64px;color:#6a6a78;transform:scaleX(0.93);">G FRI TO4 &#x27;1=BOILER3, 2=W</span><span class="t s" style="left:99.6px;top:1.28px;font-size:7.2px;line-height:8.64px;color:#6a6a78;transform:scaleX(0.91);">G FRI TO4 &#x27;1=BOILER</span></div>
<div style="left:289.2px;top:505px;width:10px;height:207px;background:#f1f1f2;border-left:1px solid #e3e3e5;"></div><div style="left:290.7px;top:522px;width:7px;height:128px;background:linear-gradient(90deg,#f3f3f4,#dcdde0);border:1px solid #b9bbc0;border-radius:2px;"></div><div style="left:292.6px;top:583.5px;width:3.2px;height:5px;background:repeating-linear-gradient(#8a8a8a 0 1px,transparent 1px 2px);"></div><svg style="left:292px;top:509px" width="4.500" height="3" viewBox="0 0 6 4"><path d="M0 3.6L3 .4l3 3.2z" fill="#666"/></svg><svg style="left:292px;top:705px" width="4.500" height="3" viewBox="0 0 6 4"><path d="M0 .4L3 3.6 6 .4z" fill="#666"/></svg>
<svg style="left:15px;top:103px" width="20" height="19" viewBox="0 0 20 19"><path d="M9.7 2v14.5M6.7 6.4v6.4M12.7 6.4v6.4M6.7 6.4h6M3.2 9.6h3.5M12.7 9.6h3.6" fill="none" stroke="#4a78b8" stroke-width="1.2"/><circle cx="9.7" cy="1.7" r="1" fill="#4a78b8"/><circle cx="9.7" cy="17" r="1" fill="#4a78b8"/><circle cx="2.2" cy="9.6" r="1" fill="#4a78b8"/><circle cx="17.2" cy="9.6" r="1" fill="#4a78b8"/></svg>
<svg style="left:15px;top:139px" width="19" height="17" viewBox="0 0 19 17"><path d="M1.5 15.5V8h9.5V4.2l4-2.7h2v14zM1.5 11.5h15.5M6 8v7.5M11 8v7.5" fill="rgba(120,175,230,.35)" stroke="#7fb1e2" stroke-width="1.3"/></svg>
<svg style="left:15px;top:176px" width="19" height="16" viewBox="0 0 19 16"><path d="M1.5 1.5h16v13h-16zM1.5 8h16M9.5 1.5v13" fill="rgba(120,175,230,.3)" stroke="#7fb1e2" stroke-width="1.4"/></svg>
<span class="t sb" style="left:16.8px;top:214.8px;font-size:7px;line-height:8.4px;color:#7fb1e2;transform:scaleX(0.96);">MUE</span>
<svg style="left:16px;top:682px" width="18" height="17" viewBox="0 0 18 17"><rect x="1.3" y="2" width="10" height="8" rx="2.5" fill="#d3e4f8" stroke="#4a7dbd" stroke-width="1.400"/><circle cx="11.600" cy="10.600" r="4" fill="#cfe2f8" stroke="#4a7dbd" stroke-width="1.500"/><path d="M11.6 8.4v2.4h1.8" fill="none" stroke="#3d74b8" stroke-width="1.1"/></svg>
<!-- p4_main -->
<div style="left:322px;top:66.5px;width:170px;height:16.4px;background:linear-gradient(rgba(255,255,255,.08),rgba(255,255,255,.02));border-right:1px solid rgba(70,110,165,.45);border-bottom:1px solid rgba(70,110,165,.4);border-radius:0 4px 0 0;"></div>
<div style="left:330.4px;top:70.1px;width:8.6px;height:8.6px;background:radial-gradient(circle at 42% 38%,#fffaf0 0%,#fde3c0 45%,#f6c890 100%);border-radius:50%;border:1px solid #f4f1ea;box-shadow:0 0 0 .8px rgba(70,90,120,.6);"></div>
<span class="t sb" style="left:345.3px;top:69.82px;font-size:7.8px;line-height:9.36px;color:#4f8bd0;transform:scaleX(0.99);">CAMS for HIS : Message Monitor</span>
<svg style="left:473.2px;top:69.6px" width="10" height="10" viewBox="-5 -5 10 10"><path d="M-3.4 -3.4L3.4 3.4M-3.4 3.4L3.4 -3.4" stroke="#6fa6de" stroke-width="1.2" fill="none"/></svg>
<div style="left:572px;top:66.5px;width:152.6px;height:16.4px;background:linear-gradient(rgba(255,255,255,.08),rgba(255,255,255,.02));border-right:1px solid rgba(70,110,165,.45);border-bottom:1px solid rgba(70,110,165,.4);border-radius:0 4px 0 0;"></div>
<div style="left:582.7px;top:70.1px;width:8.6px;height:8.6px;background:radial-gradient(circle at 42% 38%,#fffaf0 0%,#fde3c0 45%,#f6c890 100%);border-radius:50%;border:1px solid #f4f1ea;box-shadow:0 0 0 .8px rgba(70,90,120,.6);"></div>
<span class="t sb" style="left:598.6px;top:69.82px;font-size:7.8px;line-height:9.36px;color:#4f8bd0;transform:scaleX(0.96);">SO: System Status Overview</span>
<svg style="left:707px;top:69.6px" width="10" height="10" viewBox="-5 -5 10 10"><path d="M-3.4 -3.4L3.4 3.4M-3.4 3.4L3.4 -3.4" stroke="#6fa6de" stroke-width="1.2" fill="none"/></svg>
<div style="left:1135.5px;top:67px;width:12px;height:13.5px;background:rgba(255,255,255,.08);border:1px solid rgba(90,140,200,.4);border-radius:2px;"></div>
<svg style="left:1139px;top:73.500px" width="5" height="3" viewBox="0 0 7 4"><path d="M.3 .3h6.400L3.500 3.700z" fill="#5a8fc8"/></svg>
<div style="left:316.6px;top:83.6px;width:833.2px;height:635.2px;background:#e2e8f1;border-radius:6px;box-shadow:0 0 0 1px rgba(120,140,170,.22),1px 1px 0 1px rgba(115,128,150,.38);"></div>
<div style="left:494.6px;top:66px;width:76px;height:20px;background:#e2e8f1;border-radius:6px 6px 0 0;box-shadow:0 -1px 0 rgba(120,140,170,.5),1px 0 0 rgba(120,140,170,.35),-1px 0 0 rgba(120,140,170,.35);"></div>
<div style="left:501.1px;top:70.1px;width:8.6px;height:8.6px;background:radial-gradient(circle at 42% 38%,#fffaf0 0%,#fde3c0 45%,#f6c890 100%);border-radius:50%;border:1px solid #f4f1ea;box-shadow:0 0 0 .8px rgba(70,90,120,.6);"></div>
<span class="t sb" style="left:515px;top:69.82px;font-size:7.8px;line-height:9.36px;color:#5a6272;transform:scaleX(0.95);">BOILER3</span>
<svg style="left:555px;top:69.6px" width="10" height="10" viewBox="-5 -5 10 10"><path d="M-3.4 -3.4L3.4 3.4M-3.4 3.4L3.4 -3.4" stroke="#5c86b8" stroke-width="1.2" fill="none"/></svg>
<div style="left:323px;top:105px;width:406px;height:294px;background:#fff;"></div>
<div style="left:323px;top:88.4px;width:406px;height:16.6px;background:linear-gradient(#62a5d8 0%,#5a9ed3 50%,#4f94cb 100%);border-radius:4px 4px 0 0;"></div><div style="left:328.7px;top:92.4px;width:8.6px;height:8.6px;background:radial-gradient(circle at 42% 38%,#fffaf0 0%,#fde3c0 45%,#f6c890 100%);border-radius:50%;border:1px solid #f4f1ea;box-shadow:0 0 0 .8px rgba(70,90,120,.6);"></div><span class="t sb" style="left:343.6px;top:92.34px;font-size:7.6px;line-height:9.12px;color:#a2c9ec;transform:scaleX(0.94);">BOILER3</span>
<div style="left:323px;top:105px;width:406px;height:18.2px;background:#e4e9f1;"></div>
<svg style="left:325px;top:107px" width="70" height="16" viewBox="0 0 70 16"><path d="M3 3.5l5.5 7" stroke="#8a909c" stroke-width="1.300" opacity=".6"/><path d="M8 10l1.8 2.2" stroke="#333" stroke-width="1.500" opacity=".75"/><path d="M12.5 7.5l3.8 5.2 6.2-9.8" stroke="#c3c9d3" stroke-width="1.200" fill="none"/><path d="M27.5 9.5h8.5v3h-8.500zM29 9.500l1-3h5.500l.500 3" fill="#f4f6f9" stroke="#c0c6d0" stroke-width="1"/><path d="M44.500 3.500h4v4h-4zM49.500 8h4v4.500h-4zM46.500 7.500v3h3" fill="none" stroke="#4d8390" stroke-width="1"/><path d="M58.500 4.500h6v7.500h-6z" fill="none" stroke="#d3d8e0" stroke-width="1"/><path d="M60.500 8.500l1.800 2.500 4.500-7.500" fill="none" stroke="#cdd3dc" stroke-width="1.100"/></svg>
<div style="left:323px;top:383px;width:406px;height:15.8px;background:linear-gradient(#f5f6f8,#eceef2);border:1px solid #cfd4dc;"></div>
<span class="t s" style="left:326.5px;top:387.28px;font-size:7.2px;line-height:8.64px;color:#4a4a4a;transform:scaleX(0.91);">Ready</span>
<div style="left:737px;top:105px;width:407px;height:294px;background:#fff;"></div>
<div style="left:737px;top:88.4px;width:407px;height:16.6px;background:linear-gradient(#62a5d8 0%,#5a9ed3 50%,#4f94cb 100%);border-radius:4px 4px 0 0;"></div><div style="left:742.7px;top:92.4px;width:8.6px;height:8.6px;background:radial-gradient(circle at 42% 38%,#fffaf0 0%,#fde3c0 45%,#f6c890 100%);border-radius:50%;border:1px solid #f4f1ea;box-shadow:0 0 0 .8px rgba(70,90,120,.6);"></div><span class="t sb" style="left:757.6px;top:92.34px;font-size:7.6px;line-height:9.12px;color:#a2c9ec;transform:scaleX(0.98);">WATERTEMP</span>
<div style="left:737px;top:105px;width:407px;height:18.2px;background:#e4e9f1;"></div>
<svg style="left:739px;top:107px" width="70" height="16" viewBox="0 0 70 16"><path d="M3 3.5l5.5 7" stroke="#8a909c" stroke-width="1.300" opacity=".6"/><path d="M8 10l1.8 2.2" stroke="#333" stroke-width="1.500" opacity=".75"/><path d="M12.5 7.5l3.8 5.2 6.2-9.8" stroke="#c3c9d3" stroke-width="1.200" fill="none"/><path d="M27.5 9.5h8.5v3h-8.500zM29 9.500l1-3h5.500l.500 3" fill="#f4f6f9" stroke="#c0c6d0" stroke-width="1"/><path d="M44.500 3.500h4v4h-4zM49.500 8h4v4.500h-4zM46.500 7.500v3h3" fill="none" stroke="#4d8390" stroke-width="1"/><path d="M58.500 4.500h6v7.500h-6z" fill="none" stroke="#5f8a92" stroke-width="1"/><path d="M60.500 8.500l1.800 2.500 4.500-7.500" fill="none" stroke="#3f7a6a" stroke-width="1.600"/></svg>
<div style="left:737px;top:383px;width:407px;height:15.8px;background:linear-gradient(#f5f6f8,#eceef2);border:1px solid #cfd4dc;"></div>
<span class="t s" style="left:740.4px;top:387.28px;font-size:7.2px;line-height:8.64px;color:#4a4a4a;transform:scaleX(0.91);">Ready</span>
<div style="left:323px;top:422px;width:821px;height:292px;background:#e2e6ec;border-radius:0 0 4px 4px;"></div>
<div style="left:323px;top:405.4px;width:821px;height:16.5px;background:linear-gradient(#62a5d8 0%,#5a9ed3 50%,#4f94cb 100%);border-radius:4px 4px 0 0;"></div><div style="left:328.7px;top:409.35px;width:8.6px;height:8.6px;background:radial-gradient(circle at 42% 38%,#fffaf0 0%,#fde3c0 45%,#f6c890 100%);border-radius:50%;border:1px solid #f4f1ea;box-shadow:0 0 0 .8px rgba(70,90,120,.6);"></div><span class="t sb" style="left:343.6px;top:409.29px;font-size:7.6px;line-height:9.12px;color:#a2c9ec;transform:scaleX(0.98);">TG0108 Block:01 Group:08</span>
<div style="left:323px;top:421.9px;width:821px;height:18.5px;background:#fff;"></div>
<!-- p5_trend -->
<svg style="left:325.4px;top:422.6px;opacity:1" width="16" height="17" viewBox="0 0 16 17"><path d="M3 9.5h10v4H3zM4.500 9.500l1.500-5h5l1.500 5" fill="#8fa4cc" stroke="#4a5f8c" stroke-width="1.2"/><path d="M5.500 7h5" stroke="#4a5f8c" stroke-width="1"/></svg>
<svg style="left:344.7px;top:422.6px;opacity:1" width="16" height="17" viewBox="0 0 16 17"><path d="M2.500 14V4.500l5 8.500 2-3" fill="none" stroke="#4a5f8c" stroke-width="1.4"/><path d="M9 9l5-6" stroke="#2a3f78" stroke-width="2"/></svg>
<svg style="left:366px;top:422.6px;opacity:1" width="16" height="17" viewBox="0 0 16 17"><path d="M2 14V3l2.500 5 2.500-2 2 3 2-2 3 1" fill="none" stroke="#4a5f8c" stroke-width="1.2"/><path d="M7 10.500l6 2.500-6 2.500z" fill="#2a3f9a"/></svg>
<svg style="left:382px;top:422.6px;opacity:1" width="16" height="17" viewBox="0 0 16 17"><path d="M1.500 8.500h3l1.500-4v8l1.500-4h2l1.500-2v4l1.500-2h2" fill="none" stroke="#4a5f8c" stroke-width="1.2"/><circle cx="2" cy="8.500" r="1.100" fill="#4a5f8c"/><circle cx="14" cy="8.500" r="1.100" fill="#4a5f8c"/></svg>
<svg style="left:399px;top:422.6px;opacity:1" width="16" height="17" viewBox="0 0 16 17"><path d="M1.500 8.500h3l1.500-4v8l1.500-4h2l1.500-2v4l1.500-2h2" fill="none" stroke="#4a5f8c" stroke-width="1.2"/><circle cx="2" cy="8.500" r="1.100" fill="#4a5f8c"/><circle cx="14" cy="8.500" r="1.100" fill="#4a5f8c"/></svg>
<svg style="left:416px;top:422.6px;opacity:1" width="16" height="17" viewBox="0 0 16 17"><path d="M1.500 14l2.500-9 2.500 5 2-2 2.500 3 2-3 2 1" fill="none" stroke="#4a5f8c" stroke-width="1.2"/><circle cx="8" cy="3" r="1.200" fill="#4a5f8c"/><circle cx="8" cy="13.500" r="1.200" fill="#4a5f8c"/><path d="M8 4.500v7.500" stroke="#4a5f8c" stroke-width=".8" stroke-dasharray="1.500 1.500"/></svg>
<svg style="left:432.4px;top:422.6px;opacity:1" width="16" height="17" viewBox="0 0 16 17"><path d="M1.500 14l2.500-9 2.500 5 2-2 2.500 3 2-3 2 1" fill="none" stroke="#4a5f8c" stroke-width="1.2"/><circle cx="8" cy="3" r="1.200" fill="#4a5f8c"/><circle cx="8" cy="13.500" r="1.200" fill="#4a5f8c"/><path d="M8 4.500v7.500" stroke="#4a5f8c" stroke-width=".8" stroke-dasharray="1.500 1.500"/></svg>
<svg style="left:449px;top:422.6px;opacity:1" width="16" height="17" viewBox="0 0 16 17"><path d="M2.500 14V6l1.500-3 1.500 3v7l3-6 2 2 1.500-3 1.500-2v4" fill="none" stroke="#4a5f8c" stroke-width="1.2"/><circle cx="3" cy="14" r="1" fill="#4a5f8c"/></svg>
<svg style="left:469px;top:422.6px;opacity:1" width="16" height="17" viewBox="0 0 16 17"><path d="M2 2.500h7v6H2z" fill="#6d86c2" stroke="#4a5f8c" stroke-width="1"/><path d="M7 8h7v6.500H7z" fill="#3f5fae" stroke="#4a5f8c" stroke-width="1"/><path d="M9 11h3" stroke="#dfe7fa" stroke-width="1"/></svg>
<svg style="left:490px;top:422.6px;opacity:0.28" width="16" height="17" viewBox="0 0 16 17"><path d="M1.500 14l2.500-9 2.500 5 2-2 2.500 3 2-3 2 1" fill="none" stroke="#4a5f8c" stroke-width="1.2"/><circle cx="8" cy="3" r="1.200" fill="#4a5f8c"/><circle cx="8" cy="13.500" r="1.200" fill="#4a5f8c"/><path d="M8 4.500v7.500" stroke="#4a5f8c" stroke-width=".8" stroke-dasharray="1.500 1.500"/></svg>
<svg style="left:513px;top:422.6px;opacity:0.32" width="16" height="17" viewBox="0 0 16 17"><path d="M2 2.500h7v6H2z" fill="#6d86c2" stroke="#4a5f8c" stroke-width="1"/><path d="M7 8h7v6.500H7z" fill="#3f5fae" stroke="#4a5f8c" stroke-width="1"/><path d="M9 11h3" stroke="#dfe7fa" stroke-width="1"/></svg>
<svg style="left:538px;top:422.6px;opacity:1" width="16" height="17" viewBox="0 0 16 17"><path d="M1.500 2.500h13v11h-13z" fill="#e9eefa" stroke="#3f5fae" stroke-width="1.500"/><path d="M4 6.500h8v4.500H4z" fill="#8a9cc8" stroke="#4a5f8c" stroke-width=".8"/></svg>
<svg style="left:559px;top:422.6px;opacity:1" width="16" height="17" viewBox="0 0 16 17"><path d="M1.500 9h2.500l2-5.500 2 8 2-5 2 2.500h2.500" fill="none" stroke="#4a5f8c" stroke-width="1.500"/><path d="M6 2l-2.500 3h5z" fill="#4a5f8c"/></svg>
<svg style="left:575.5px;top:422.6px;opacity:1" width="16" height="17" viewBox="0 0 16 17"><path d="M2 14l2.500-8 2.500 5 3-6 2 3" fill="none" stroke="#4a5f8c" stroke-width="1.300"/><path d="M13.500 2v12M12 2h3" stroke="#4a5f8c" stroke-width="1.200"/></svg>
<svg style="left:596.3px;top:422.6px;opacity:1" width="16" height="17" viewBox="0 0 16 17"><ellipse cx="9" cy="11" rx="5.500" ry="3" fill="#9fb0d0" stroke="#4a5f8c" stroke-width="1"/><path d="M2.500 3h7v5h-7z" fill="#6f86b8" stroke="#4a5f8c" stroke-width="1"/><path d="M3.500 5h5" stroke="#e5ebf8" stroke-width="1"/></svg>
<svg style="left:613px;top:422.6px;opacity:1" width="16" height="17" viewBox="0 0 16 17"><path d="M5 5.500h8v9H5z" fill="#7d92c4" stroke="#4a5f8c" stroke-width="1"/><path d="M2.500 2h8v4h-8z" fill="#5a72ae" stroke="#4a5f8c" stroke-width="1"/><path d="M6 8.500h6M6 10.500h6M6 12.500h6M8 6.500v8M10.500 6.500v8" stroke="#e3e9f7" stroke-width=".7"/></svg>
<svg style="left:633.6px;top:422.6px;opacity:0.3" width="16" height="17" viewBox="0 0 16 17"><path d="M2.500 14V6l1.500-3 1.500 3v7l3-6 2 2 1.500-3 1.500-2v4" fill="none" stroke="#4a5f8c" stroke-width="1.2"/><circle cx="3" cy="14" r="1" fill="#4a5f8c"/></svg>
<svg style="left:650.7px;top:422.6px;opacity:0.3" width="16" height="17" viewBox="0 0 16 17"><path d="M5 5.500h8v9H5z" fill="#7d92c4" stroke="#4a5f8c" stroke-width="1"/><path d="M2.500 2h8v4h-8z" fill="#5a72ae" stroke="#4a5f8c" stroke-width="1"/><path d="M6 8.500h6M6 10.500h6M6 12.500h6M8 6.500v8M10.500 6.500v8" stroke="#e3e9f7" stroke-width=".7"/></svg>
<svg style="left:670px;top:422.6px;opacity:1" width="16" height="17" viewBox="0 0 16 17"><ellipse cx="8.500" cy="11" rx="5.500" ry="3" fill="#8fa2c8" stroke="#4a5f8c" stroke-width="1"/><path d="M3 4.500h9M3 4.500l3-2.500M3 4.500l3 2.500" fill="none" stroke="#4a5f8c" stroke-width="1.600"/></svg>
<svg style="left:687.6px;top:422.6px;opacity:0.45" width="16" height="17" viewBox="0 0 16 17"><ellipse cx="8.500" cy="11" rx="5.500" ry="3" fill="#8fa2c8" stroke="#4a5f8c" stroke-width="1"/><path d="M3 4.500h9M3 4.500l3-2.500M3 4.500l3 2.500" fill="none" stroke="#4a5f8c" stroke-width="1.600"/></svg>
<svg style="left:703.3px;top:422.6px;opacity:1" width="16" height="17" viewBox="0 0 16 17"><path d="M5 5.500h8v9H5z" fill="#7d92c4" stroke="#4a5f8c" stroke-width="1"/><path d="M2.500 2h8v4h-8z" fill="#5a72ae" stroke="#4a5f8c" stroke-width="1"/><path d="M6 8.500h6M6 10.500h6M6 12.500h6M8 6.500v8M10.500 6.500v8" stroke="#e3e9f7" stroke-width=".7"/></svg>
<svg style="left:728.6px;top:422.6px;opacity:1" width="16" height="17" viewBox="0 0 16 17"><path d="M1.500 13V6l2-3 2.500 8 2.500-5 2 3.500 2-1.500h2" fill="none" stroke="#4a5f8c" stroke-width="1.400"/></svg>
<div style="left:486px;top:430.6px;width:2px;height:2px;background:#3a4a78;"></div>
<div style="left:507px;top:430.6px;width:2px;height:2px;background:#b8bfcc;"></div>
<div style="left:531px;top:430.6px;width:2px;height:2px;background:#b8bfcc;"></div>
<div style="left:721px;top:430.6px;width:2px;height:2px;background:#3a4a78;"></div>
<div style="left:364px;top:424px;width:1px;height:14px;background:#dcdfe5;"></div>
<div style="left:466.7px;top:424px;width:1px;height:14px;background:#dcdfe5;"></div>
<div style="left:535px;top:424px;width:1px;height:14px;background:#dcdfe5;"></div>
<div style="left:594px;top:424px;width:1px;height:14px;background:#dcdfe5;"></div>
<div style="left:631.5px;top:424px;width:1px;height:14px;background:#dcdfe5;"></div>
<div style="left:667.5px;top:424px;width:1px;height:14px;background:#dcdfe5;"></div>
<svg style="left:323px;top:440px" width="821" height="230" viewBox="0 0 821 230"><rect x="63.700" y="7.800" width="736.600" height="212" fill="#e9ebef" stroke="#d5d9e0" stroke-width="1"/><rect x="64.200" y="8.300" width="735.600" height="8" fill="#e3e6eb"/><rect x="65.500" y="9" width="6" height="6.500" fill="none" stroke="#d3d8e2" stroke-width=".8"/><path d="M63.700 16.6H800.300" stroke="#dfe2e8" stroke-width="1"/><path d="M63.700 56.9H800.300" stroke="#dfe2e8" stroke-width="1"/><path d="M63.700 97.2H800.300" stroke="#dfe2e8" stroke-width="1"/><path d="M63.700 137.5H800.300" stroke="#dfe2e8" stroke-width="1"/><path d="M63.700 177.8H800.300" stroke="#dfe2e8" stroke-width="1"/><path d="M63.700 218.1H800.300" stroke="#dfe2e8" stroke-width="1"/><path d="M145.0 8V219.700" stroke="#dfe2e7" stroke-width="1"/><path d="M268.0 8V219.700" stroke="#dfe2e7" stroke-width="1"/><path d="M391.8 8V219.700" stroke="#dfe2e7" stroke-width="1"/><path d="M513.7 8V219.700" stroke="#dfe2e7" stroke-width="1"/><path d="M635.8 8V219.700" stroke="#dfe2e7" stroke-width="1"/><path d="M758.3 8V219.700" stroke="#dfe2e7" stroke-width="1"/><rect x="64.200" y="207" width="735.600" height="12.500" fill="#e3e5ea" opacity=".7"/><path d="M63.7 172.8L75.3 175.4L89.5 172.0L100.4 175.4L110.9 172.0L127.3 175.3L140.9 173.4L156.6 172.0L177.1 175.4L197.5 172.0L220.6 174.0L237.8 175.3L248.9 171.8L279.3 175.3L321.1 172.0L336.3 175.4L350.5 172.0L361.4 175.4L371.9 172.0L388.3 175.3L401.9 173.4L417.6 172.0L438.1 175.4L458.5 172.0L481.6 174.0L498.8 175.3L509.9 171.8L540.3 175.3L582.1 172.0L597.3 175.4L611.5 172.0L622.4 175.4L632.9 172.0L649.3 175.3L662.9 173.4L678.6 172.0L699.1 175.4L719.5 172.0L742.6 174.0L759.8 175.3L770.9 171.8L800.6 175.2" fill="none" stroke="#d8d8d1" stroke-width="1.600" stroke-linejoin="round"/><path d="M63.7 163.4L75.3 167.4L89.5 162.2L100.4 167.4L110.9 162.2L127.3 167.3L140.9 164.3L156.6 162.2L177.1 167.4L197.5 162.2L220.6 165.3L237.8 167.3L248.9 161.9L279.3 167.3L321.1 162.2L336.3 167.4L350.5 162.2L361.4 167.4L371.9 162.2L388.3 167.3L401.9 164.3L417.6 162.2L438.1 167.4L458.5 162.2L481.6 165.3L498.8 167.3L509.9 161.9L540.3 167.3L582.1 162.2L597.3 167.4L611.5 162.2L622.4 167.4L632.9 162.2L649.3 167.3L662.9 164.3L678.6 162.2L699.1 167.4L719.5 162.2L742.6 165.3L759.8 167.3L770.9 161.9L800.6 167.1" fill="none" stroke="#2d2c90" stroke-width="2.300" stroke-linejoin="round"/><path d="M63.7 118.8L75.3 123.1L89.5 117.5L100.4 123.1L110.9 117.5L127.3 123.0L140.9 119.7L156.6 117.5L177.1 123.1L197.5 117.5L220.6 120.8L237.8 123.0L248.9 117.2L279.3 123.0L321.1 117.5L336.3 123.1L350.5 117.5L361.4 123.1L371.9 117.5L388.3 123.0L401.9 119.7L417.6 117.5L438.1 123.1L458.5 117.5L481.6 120.8L498.8 123.0L509.9 117.2L540.3 123.0L582.1 117.5L597.3 123.1L611.5 117.5L622.4 123.1L632.9 117.5L649.3 123.0L662.9 119.7L678.6 117.5L699.1 123.1L719.5 117.5L742.6 120.8L759.8 123.0L770.9 117.2L800.6 122.8" fill="none" stroke="#2fa064" stroke-width="1.600" stroke-linejoin="round"/><path d="M63.7 37.5L75.3 43.6L89.5 35.6L100.4 43.6L110.9 35.6L127.3 43.4L140.9 38.8L156.6 35.6L177.1 43.6L197.5 35.6L220.6 40.3L237.8 43.4L248.9 35.2L279.3 43.4L321.1 35.6L336.3 43.6L350.5 35.6L361.4 43.6L371.9 35.6L388.3 43.4L401.9 38.8L417.6 35.6L438.1 43.6L458.5 35.6L481.6 40.3L498.8 43.4L509.9 35.2L540.3 43.4L582.1 35.6L597.3 43.6L611.5 35.6L622.4 43.6L632.9 35.6L649.3 43.4L662.9 38.8L678.6 35.6L699.1 43.6L719.5 35.6L742.6 40.3L759.8 43.4L770.9 35.2L800.6 43.2" fill="none" stroke="#e2483c" stroke-width="1.800" stroke-linejoin="round"/><path d="M800.600 13V219.700" stroke="#a4abb8" stroke-width="1"/><path d="M795.200 6h11l-5.500 10z" fill="#1c9fe0"/></svg>
<span class="t s" style="left:357.6px;top:451.8px;font-size:9px;line-height:10.8px;color:#4b4a9c;transform:scaleX(1.05);">325.6</span>
<span class="t s" style="left:357.6px;top:492.05px;font-size:9px;line-height:10.8px;color:#4b4a9c;transform:scaleX(1.05);">285.6</span>
<span class="t s" style="left:357.6px;top:532.3px;font-size:9px;line-height:10.8px;color:#4b4a9c;transform:scaleX(1.05);">245.6</span>
<span class="t s" style="left:357.6px;top:572.55px;font-size:9px;line-height:10.8px;color:#4b4a9c;transform:scaleX(1.05);">205.6</span>
<span class="t s" style="left:357.6px;top:612.8px;font-size:9px;line-height:10.8px;color:#4b4a9c;transform:scaleX(1.05);">165.6</span>
<span class="t s" style="left:357.6px;top:653.05px;font-size:9px;line-height:10.8px;color:#4b4a9c;transform:scaleX(1.05);">125.6</span>
<span class="t s" style="left:350.300px;top:557.500px;font-size:9px;line-height:10px;color:#4b4a9c;transform:translate(-50%,-50%) rotate(-90deg);transform-origin:50% 50%;">FI316.PV</span>
<span class="t s" style="left:456.25px;top:665.8px;font-size:8px;line-height:9.6px;color:#5a5a5e;transform:scaleX(1.17);">02:48</span>
<span class="t s" style="left:449.25px;top:680.2px;font-size:8px;line-height:9.6px;color:#5a5a5e;transform:scaleX(1.2);">08/29/11</span>
<span class="t s" style="left:579.25px;top:665.8px;font-size:8px;line-height:9.6px;color:#5a5a5e;transform:scaleX(1.17);">02:50</span>
<span class="t s" style="left:703.05px;top:665.8px;font-size:8px;line-height:9.6px;color:#5a5a5e;transform:scaleX(1.17);">02:52</span>
<span class="t s" style="left:824.95px;top:665.8px;font-size:8px;line-height:9.6px;color:#5a5a5e;transform:scaleX(1.17);">02:54</span>
<span class="t s" style="left:817.95px;top:680.2px;font-size:8px;line-height:9.6px;color:#5a5a5e;transform:scaleX(1.2);">08/29/11</span>
<span class="t s" style="left:947.05px;top:665.8px;font-size:8px;line-height:9.6px;color:#5a5a5e;transform:scaleX(1.17);">02:56</span>
<span class="t s" style="left:1069.55px;top:665.8px;font-size:8px;line-height:9.6px;color:#5a5a5e;transform:scaleX(1.17);">02:58</span>
<div style="left:323.5px;top:679px;width:9.5px;height:10.5px;background:#e9ecf1;border:1px solid #d3d8e0;"></div>
<div style="left:326px;top:693.5px;width:2px;height:2px;background:#444;"></div>
<div style="left:323px;top:690.6px;width:812px;height:7.5px;background:linear-gradient(#e9ecf0,#f2f4f7);"></div>
<div style="left:872.8px;top:691.2px;width:155px;height:5.6px;background:linear-gradient(#f6f7f9,#dfe2e7);border:1px solid #c3c7ce;border-radius:2px;"></div>
<div style="left:948.5px;top:693px;width:4px;height:2px;background:#777;"></div>
<div style="left:1127px;top:693px;width:2.2px;height:2.2px;background:#555;"></div>
<div style="left:1127.5px;top:441px;width:15.5px;height:250px;background:linear-gradient(90deg,#e6e9ee,#eef0f4 40%);"></div>
<div style="left:1135px;top:600.6px;width:7.5px;height:35px;background:linear-gradient(90deg,#f6f7f9,#dfe2e7);border:1px solid #b9bdc5;border-radius:2px;"></div>
<div style="left:1137.7px;top:616px;width:2.4px;height:4.5px;background:repeating-linear-gradient(#777 0 1px,transparent 1px 2px);"></div>
<svg style="left:1137px;top:445.500px" width="4" height="3" viewBox="0 0 6 4"><path d="M0 3.600L3 .4l3 3.200z" fill="#555"/></svg>
<svg style="left:1137px;top:684.500px" width="4" height="3" viewBox="0 0 6 4"><path d="M0 .4L3 3.600 6 .4z" fill="#555"/></svg>
<div style="left:323px;top:698px;width:821px;height:16.5px;background:linear-gradient(#eef1f5,#e6e9ee);border-radius:0 0 4px 4px;"></div>
<div style="left:422.9px;top:699.8px;width:82.8px;height:14.3px;background:#cfe4f7;border:1px solid #9cc6ec;"></div>
<div style="left:342.5px;top:701.9px;width:10.6px;height:10.6px;background:#10a04d;border-radius:50%;border:1px solid #0d8a42;"></div>
<span class="t sb" style="left:357.4px;top:701.9px;font-size:9.5px;line-height:11.4px;color:#3f3f44;transform:scaleX(0.91);">1</span>
<span class="t sb" style="left:367.3px;top:701.9px;font-size:9.5px;line-height:11.4px;color:#3f3f44;">FI216.PV</span>
<div style="left:425.4px;top:701.9px;width:10.6px;height:10.6px;background:#2f3196;border-radius:50%;border:1px solid #25267c;"></div>
<span class="t sb" style="left:440.3px;top:701.9px;font-size:9.5px;line-height:11.4px;color:#3f3f44;transform:scaleX(0.91);">2</span>
<span class="t sb" style="left:450.2px;top:701.9px;font-size:9.5px;line-height:11.4px;color:#3f3f44;">FI316.PV</span>
<div style="left:508.3px;top:701.9px;width:10.6px;height:10.6px;background:#e8262a;border-radius:50%;border:1px solid #c91f22;"></div>
<span class="t sb" style="left:523.2px;top:701.9px;font-size:9.5px;line-height:11.4px;color:#3f3f44;transform:scaleX(0.91);">3</span>
<span class="t sb" style="left:533.1px;top:701.9px;font-size:9.5px;line-height:11.4px;color:#3f3f44;">FI416.PV</span>
<div style="left:591.2px;top:701.9px;width:10.6px;height:10.6px;background:#1fb1ea;border-radius:50%;border:1px solid #1a9bd0;"></div>
<span class="t sb" style="left:606.1px;top:701.9px;font-size:9.5px;line-height:11.4px;color:#3f3f44;transform:scaleX(0.91);">4</span>
<span class="t sb" style="left:616px;top:701.9px;font-size:9.5px;line-height:11.4px;color:#3f3f44;">FI516.PV</span>
<div style="left:674.1px;top:701.9px;width:10.6px;height:10.6px;background:#2f8ecb;border-radius:50%;border:1px solid #2879b0;"></div>
<span class="t sb" style="left:689px;top:701.9px;font-size:9.5px;line-height:11.4px;color:#3f3f44;transform:scaleX(0.91);">5</span>
<span class="t sb" style="left:698.9px;top:701.9px;font-size:9.5px;line-height:11.4px;color:#3f3f44;">FIA001.PV</span>
<div style="left:757px;top:701.9px;width:10.6px;height:10.6px;background:#e5127d;border-radius:50%;border:1px solid #c50f6c;"></div>
<span class="t sb" style="left:771.9px;top:701.9px;font-size:9.5px;line-height:11.4px;color:#3f3f44;transform:scaleX(0.91);">6</span>
<span class="t sb" style="left:781.8px;top:701.9px;font-size:9.5px;line-height:11.4px;color:#3f3f44;">FIB001.PV</span>
<div style="left:839.9px;top:701.9px;width:10.6px;height:10.6px;background:#c9cbc0;border-radius:50%;border:1px solid #9a9c94;"></div>
<span class="t sb" style="left:854.8px;top:701.9px;font-size:9.5px;line-height:11.4px;color:#3f3f44;transform:scaleX(0.91);">7</span>
<span class="t sb" style="left:864.7px;top:701.9px;font-size:9.5px;line-height:11.4px;color:#3f3f44;">FIC001.PV</span>
<div style="left:922.8px;top:701.9px;width:10.6px;height:10.6px;background:#ffffff;border-radius:50%;border:1px solid #b5b8bf;"></div>
<span class="t sb" style="left:937.7px;top:701.9px;font-size:9.5px;line-height:11.4px;color:#3f3f44;transform:scaleX(0.91);">8</span>
<span class="t sb" style="left:947.6px;top:701.9px;font-size:9.5px;line-height:11.4px;color:#3f3f44;">FIABC01.PV</span>
<!-- p6_face -->
<div style="left:747.4px;top:123.3px;width:386.08px;height:259.6px;background:#c6c9d0;"></div>
<div style="left:747.4px;top:123.3px;width:386.08px;height:4.6px;background:#a9adb4;"></div>
<div style="left:747.4px;top:127.9px;width:386.08px;height:35px;background:#d1d4d9;"></div>
<div style="left:747.4px;top:379.6px;width:386.08px;height:3.3px;background:#a9adb4;"></div>
<div style="left:747.4px;top:364.3px;width:386.08px;height:1px;background:#aeb2b9;"></div>
<div style="left:747.4px;top:365.3px;width:386.08px;height:1px;background:#d9dce1;"></div>
<span class="t m" style="left:757.85px;top:129.84px;font-size:7.6px;line-height:9.12px;color:#6c6f76;">TI1001</span>
<span class="t m" style="left:749.9px;top:139.12px;font-size:7.8px;line-height:9.36px;color:#6c6f76;">UnitA te</span>
<span class="t m" style="left:749.9px;top:148.92px;font-size:7.8px;line-height:9.36px;color:#6c6f76;">mperatur</span>
<div style="left:748.6px;top:163.2px;width:46.06px;height:25.2px;background:#231f20;"></div>
<div style="left:759px;top:163.4px;width:6px;height:6px;background:#22b060;"></div>
<span class="t mb" style="left:748.8px;top:171.62px;font-size:6.3px;line-height:7.56px;color:#3aa0b2;">AUT</span>
<span class="t mb" style="left:748.8px;top:181.02px;font-size:6.3px;line-height:7.56px;color:#3aa0b2;">NR</span>
<div style="left:748.6px;top:191.6px;width:46.06px;height:16.2px;background:#231f20;"></div>
<span class="t mb" style="left:749px;top:191.34px;font-size:6.6px;line-height:7.92px;color:#c9c9c9;">PV</span>
<span class="t mb" style="left:782.58px;top:191.34px;font-size:6.6px;line-height:7.92px;color:#c9c9c9;">DEG</span>
<span class="t mb" style="left:777.66px;top:200px;font-size:7px;line-height:8.4px;color:#3fa9bb;">69.0</span>
<span class="t m" style="left:779.06px;top:245px;font-size:6px;line-height:7.2px;color:#70737a;transform:scaleX(0.83);">100.0</span>
<span class="t m" style="left:785.06px;top:346px;font-size:6px;line-height:7.2px;color:#70737a;transform:scaleX(0.83);">0.0</span>
<div style="left:765.4px;top:254.8px;width:13.4px;height:89.6px;background:#a3ada9;"></div>
<div style="left:766.6px;top:255.8px;width:8.4px;height:87.6px;background:#231f20;"></div>
<div style="left:775px;top:255.8px;width:3.2px;height:87.6px;background:#7f9a8c;background-image:repeating-linear-gradient(rgba(255,255,255,.22) 0 1px,transparent 1px 8.76px);"></div>
<div style="left:767.5px;top:287.4px;width:6.4px;height:54.2px;background:#1fae5b;"></div>
<div style="left:768.43px;top:370.2px;width:6.2px;height:6.2px;background:#1f5e94;transform:rotate(45deg);"></div>
<div style="left:747.4px;top:127.9px;width:1px;height:251.7px;background:rgba(255,255,255,.45);"></div>
<div style="left:794.66px;top:127.9px;width:1px;height:251.7px;background:#9a9ea6;"></div>
<div style="left:794.56px;top:163px;width:2.2px;height:45px;background:#d9dbe0;"></div>
<div style="left:794.06px;top:123.3px;width:51.46px;height:4.6px;background:#b4d3bf;"></div>
<div style="left:794.06px;top:379.6px;width:51.46px;height:3.3px;background:#9fcdb0;"></div>
<span class="t m" style="left:806.11px;top:129.84px;font-size:7.6px;line-height:9.12px;color:#6c6f76;">TI1002</span>
<span class="t m" style="left:798.16px;top:139.12px;font-size:7.8px;line-height:9.36px;color:#6c6f76;">UnitB te</span>
<span class="t m" style="left:798.16px;top:148.92px;font-size:7.8px;line-height:9.36px;color:#6c6f76;">mperatur</span>
<div style="left:796.86px;top:163.2px;width:46.06px;height:25.2px;background:#231f20;"></div>
<div style="left:807.26px;top:163.4px;width:6px;height:6px;background:#ee3a3f;"></div>
<span class="t mb" style="left:797.06px;top:171.62px;font-size:6.3px;line-height:7.56px;color:#3aa0b2;">AUT</span>
<span class="t mb" style="left:797.06px;top:181.02px;font-size:6.3px;line-height:7.56px;color:#3aa0b2;">HI</span>
<div style="left:796.86px;top:191.6px;width:46.06px;height:16.2px;background:#231f20;"></div>
<span class="t mb" style="left:797.26px;top:191.34px;font-size:6.6px;line-height:7.92px;color:#c9c9c9;">PV</span>
<span class="t mb" style="left:830.84px;top:191.34px;font-size:6.6px;line-height:7.92px;color:#c9c9c9;">DEG</span>
<span class="t mb" style="left:825.92px;top:200px;font-size:7px;line-height:8.4px;color:#3fa9bb;">49.0</span>
<span class="t m" style="left:827.32px;top:245px;font-size:6px;line-height:7.2px;color:#70737a;transform:scaleX(0.83);">100.0</span>
<span class="t m" style="left:833.32px;top:346px;font-size:6px;line-height:7.2px;color:#70737a;transform:scaleX(0.83);">0.0</span>
<div style="left:813.66px;top:254.8px;width:13.4px;height:89.6px;background:#a3ada9;"></div>
<div style="left:814.86px;top:255.8px;width:8.4px;height:87.6px;background:#231f20;"></div>
<div style="left:823.26px;top:255.8px;width:3.2px;height:87.6px;background:#8c9297;background-image:repeating-linear-gradient(rgba(255,255,255,.22) 0 1px,transparent 1px 8.76px);"></div>
<div style="left:815.76px;top:298.6px;width:6.4px;height:43px;background:#ee3340;"></div>
<div style="left:816.69px;top:370.2px;width:6.2px;height:6.2px;background:#1f5e94;transform:rotate(45deg);"></div>
<div style="left:795.66px;top:127.9px;width:1px;height:251.7px;background:rgba(255,255,255,.45);"></div>
<div style="left:842.92px;top:127.9px;width:1px;height:251.7px;background:#9a9ea6;"></div>
<div style="left:842.82px;top:163px;width:2.2px;height:45px;background:#d9dbe0;"></div>
<span class="t m" style="left:854.37px;top:129.84px;font-size:7.6px;line-height:9.12px;color:#6c6f76;">TI1003</span>
<span class="t m" style="left:846.42px;top:139.12px;font-size:7.8px;line-height:9.36px;color:#6c6f76;">UnitC te</span>
<span class="t m" style="left:846.42px;top:148.92px;font-size:7.8px;line-height:9.36px;color:#6c6f76;">mperatur</span>
<div style="left:845.12px;top:163.2px;width:46.06px;height:25.2px;background:#231f20;"></div>
<div style="left:855.52px;top:163.4px;width:6px;height:6px;background:#22b060;"></div>
<span class="t mb" style="left:845.32px;top:171.62px;font-size:6.3px;line-height:7.56px;color:#3aa0b2;">AUT</span>
<span class="t mb" style="left:845.32px;top:181.02px;font-size:6.3px;line-height:7.56px;color:#3aa0b2;">NR</span>
<div style="left:845.12px;top:191.6px;width:46.06px;height:16.2px;background:#231f20;"></div>
<span class="t mb" style="left:845.52px;top:191.34px;font-size:6.6px;line-height:7.92px;color:#c9c9c9;">PV</span>
<span class="t mb" style="left:879.1px;top:191.34px;font-size:6.6px;line-height:7.92px;color:#c9c9c9;">DEG</span>
<span class="t mb" style="left:874.18px;top:200px;font-size:7px;line-height:8.4px;color:#3fa9bb;">63.0</span>
<span class="t m" style="left:875.58px;top:245px;font-size:6px;line-height:7.2px;color:#70737a;transform:scaleX(0.83);">100.0</span>
<span class="t m" style="left:881.58px;top:346px;font-size:6px;line-height:7.2px;color:#70737a;transform:scaleX(0.83);">0.0</span>
<div style="left:861.92px;top:254.8px;width:13.4px;height:89.6px;background:#a3ada9;"></div>
<div style="left:863.12px;top:255.8px;width:8.4px;height:87.6px;background:#231f20;"></div>
<div style="left:871.52px;top:255.8px;width:3.2px;height:87.6px;background:#7f9a8c;background-image:repeating-linear-gradient(rgba(255,255,255,.22) 0 1px,transparent 1px 8.76px);"></div>
<div style="left:864.02px;top:296.3px;width:6.4px;height:45.3px;background:#1fae5b;"></div>
<div style="left:864.95px;top:370.2px;width:6.2px;height:6.2px;background:#1f5e94;transform:rotate(45deg);"></div>
<div style="left:843.92px;top:127.9px;width:1px;height:251.7px;background:rgba(255,255,255,.45);"></div>
<div style="left:891.18px;top:127.9px;width:1px;height:251.7px;background:#9a9ea6;"></div>
<div style="left:891.08px;top:163px;width:2.2px;height:45px;background:#d9dbe0;"></div>
<span class="t m" style="left:902.63px;top:129.84px;font-size:7.6px;line-height:9.12px;color:#6c6f76;">TI1004</span>
<span class="t m" style="left:894.68px;top:139.12px;font-size:7.8px;line-height:9.36px;color:#6c6f76;">UnitD te</span>
<span class="t m" style="left:894.68px;top:148.92px;font-size:7.8px;line-height:9.36px;color:#6c6f76;">mperatur</span>
<div style="left:893.38px;top:163.2px;width:46.06px;height:25.2px;background:#231f20;"></div>
<div style="left:903.78px;top:163.4px;width:6px;height:6px;background:#22b060;"></div>
<span class="t mb" style="left:893.58px;top:171.62px;font-size:6.3px;line-height:7.56px;color:#3aa0b2;">AUT</span>
<span class="t mb" style="left:893.58px;top:181.02px;font-size:6.3px;line-height:7.56px;color:#3aa0b2;">NR</span>
<div style="left:893.38px;top:191.6px;width:46.06px;height:16.2px;background:#231f20;"></div>
<span class="t mb" style="left:893.78px;top:191.34px;font-size:6.6px;line-height:7.92px;color:#c9c9c9;">PV</span>
<span class="t mb" style="left:927.36px;top:191.34px;font-size:6.6px;line-height:7.92px;color:#c9c9c9;">DEG</span>
<span class="t mb" style="left:922.44px;top:200px;font-size:7px;line-height:8.4px;color:#3fa9bb;">67.0</span>
<span class="t m" style="left:923.84px;top:245px;font-size:6px;line-height:7.2px;color:#70737a;transform:scaleX(0.83);">100.0</span>
<span class="t m" style="left:929.84px;top:346px;font-size:6px;line-height:7.2px;color:#70737a;transform:scaleX(0.83);">0.0</span>
<div style="left:910.18px;top:254.8px;width:13.4px;height:89.6px;background:#a3ada9;"></div>
<div style="left:911.38px;top:255.8px;width:8.4px;height:87.6px;background:#231f20;"></div>
<div style="left:919.78px;top:255.8px;width:3.2px;height:87.6px;background:#7f9a8c;background-image:repeating-linear-gradient(rgba(255,255,255,.22) 0 1px,transparent 1px 8.76px);"></div>
<div style="left:912.28px;top:291.8px;width:6.4px;height:49.8px;background:#1fae5b;"></div>
<div style="left:913.21px;top:370.2px;width:6.2px;height:6.2px;background:#1f5e94;transform:rotate(45deg);"></div>
<div style="left:892.18px;top:127.9px;width:1px;height:251.7px;background:rgba(255,255,255,.45);"></div>
<div style="left:939.44px;top:127.9px;width:1px;height:251.7px;background:#9a9ea6;"></div>
<div style="left:939.34px;top:163px;width:2.2px;height:45px;background:#d9dbe0;"></div>
<span class="t m" style="left:948.61px;top:129.84px;font-size:7.6px;line-height:9.12px;color:#6c6f76;">TIC2001</span>
<span class="t m" style="left:942.94px;top:139.12px;font-size:7.8px;line-height:9.36px;color:#6c6f76;">UnitE te</span>
<span class="t m" style="left:942.94px;top:148.92px;font-size:7.8px;line-height:9.36px;color:#6c6f76;">mp. cntl</span>
<div style="left:941.64px;top:163.2px;width:46.06px;height:25.2px;background:#231f20;"></div>
<div style="left:952.04px;top:163.4px;width:6px;height:6px;background:#22b060;"></div>
<span class="t mb" style="left:941.84px;top:171.62px;font-size:6.3px;line-height:7.56px;color:#3aa0b2;">MAN</span>
<span class="t mb" style="left:941.84px;top:181.02px;font-size:6.3px;line-height:7.56px;color:#3aa0b2;">NR</span>
<div style="left:941.64px;top:191.6px;width:46.06px;height:50.6px;background:#231f20;"></div>
<span class="t mb" style="left:942.04px;top:191.34px;font-size:6.6px;line-height:7.92px;color:#c9c9c9;">PV</span>
<span class="t mb" style="left:971.66px;top:191.34px;font-size:6.6px;line-height:7.92px;color:#c9c9c9;">DEGC</span>
<span class="t mb" style="left:970.7px;top:200px;font-size:7px;line-height:8.4px;color:#3fa9bb;">62.0</span>
<span class="t mb" style="left:942.04px;top:209.14px;font-size:6.6px;line-height:7.92px;color:#c9c9c9;">SV</span>
<span class="t mb" style="left:971.66px;top:209.14px;font-size:6.6px;line-height:7.92px;color:#c9c9c9;">DEGC</span>
<span class="t mb" style="left:970.7px;top:217.8px;font-size:7px;line-height:8.4px;color:#3fa9bb;">62.0</span>
<span class="t mb" style="left:942.04px;top:226.94px;font-size:6.6px;line-height:7.92px;color:#c9c9c9;">MV</span>
<span class="t mb" style="left:983.54px;top:226.94px;font-size:6.6px;line-height:7.92px;color:#c9c9c9;">%</span>
<span class="t mb" style="left:970.7px;top:235.6px;font-size:7px;line-height:8.4px;color:#3fa9bb;">49.0</span>
<span class="t m" style="left:972.1px;top:245px;font-size:6px;line-height:7.2px;color:#70737a;transform:scaleX(0.83);">100.0</span>
<span class="t m" style="left:978.1px;top:346px;font-size:6px;line-height:7.2px;color:#70737a;transform:scaleX(0.83);">0.0</span>
<div style="left:958.44px;top:254.8px;width:13.4px;height:89.6px;background:#a3ada9;"></div>
<div style="left:959.64px;top:255.8px;width:8.4px;height:87.6px;background:#231f20;"></div>
<div style="left:968.04px;top:255.8px;width:3.2px;height:87.6px;background:#7f9a8c;background-image:repeating-linear-gradient(rgba(255,255,255,.22) 0 1px,transparent 1px 8.76px);"></div>
<div style="left:960.54px;top:304.9px;width:6.4px;height:36.7px;background:#1fae5b;"></div>
<svg style="left:948.14px;top:255.200px" width="7" height="5" viewBox="0 0 8 6"><path d="M.5 1h4l3 2-3 2h-4z" fill="#3667b4"/></svg>
<svg style="left:948.14px;top:338px" width="7" height="5" viewBox="0 0 8 6"><path d="M.5 1h4l3 2-3 2h-4z" fill="#3667b4"/></svg>
<svg style="left:953.44px;top:296px" width="5" height="6" viewBox="0 0 6 7"><path d="M.5 .5l5 3-5 3z" fill="#e8323c"/></svg>
<div style="left:972.24px;top:296px;width:2.6px;height:6px;border:1px solid #e3d890;border-left:0;"></div>
<div style="left:961.47px;top:370.2px;width:6.2px;height:6.2px;background:#1f5e94;transform:rotate(45deg);"></div>
<div style="left:940.44px;top:127.9px;width:1px;height:251.7px;background:rgba(255,255,255,.45);"></div>
<div style="left:987.7px;top:127.9px;width:1px;height:251.7px;background:#9a9ea6;"></div>
<div style="left:987.6px;top:163px;width:2.2px;height:79.4px;background:#d9dbe0;"></div>
<span class="t m" style="left:996.87px;top:129.84px;font-size:7.6px;line-height:9.12px;color:#6c6f76;">TIC2002</span>
<span class="t m" style="left:991.2px;top:139.12px;font-size:7.8px;line-height:9.36px;color:#6c6f76;">UnitF te</span>
<span class="t m" style="left:991.2px;top:148.92px;font-size:7.8px;line-height:9.36px;color:#6c6f76;">mp. cntl</span>
<div style="left:989.9px;top:163.2px;width:46.06px;height:25.2px;background:#231f20;"></div>
<div style="left:1000.3px;top:163.4px;width:6px;height:6px;background:#22b060;"></div>
<span class="t mb" style="left:990.1px;top:171.62px;font-size:6.3px;line-height:7.56px;color:#3aa0b2;">MAN</span>
<span class="t mb" style="left:990.1px;top:181.02px;font-size:6.3px;line-height:7.56px;color:#3aa0b2;">NR</span>
<div style="left:989.9px;top:191.6px;width:46.06px;height:50.6px;background:#231f20;"></div>
<span class="t mb" style="left:990.3px;top:191.34px;font-size:6.6px;line-height:7.92px;color:#c9c9c9;">PV</span>
<span class="t mb" style="left:1019.92px;top:191.34px;font-size:6.6px;line-height:7.92px;color:#c9c9c9;">DEGC</span>
<span class="t mb" style="left:1018.96px;top:200px;font-size:7px;line-height:8.4px;color:#3fa9bb;">66.0</span>
<span class="t mb" style="left:990.3px;top:209.14px;font-size:6.6px;line-height:7.92px;color:#c9c9c9;">SV</span>
<span class="t mb" style="left:1019.92px;top:209.14px;font-size:6.6px;line-height:7.92px;color:#c9c9c9;">DEGC</span>
<span class="t mb" style="left:1023.16px;top:217.8px;font-size:7px;line-height:8.4px;color:#3fa9bb;">0.0</span>
<span class="t mb" style="left:990.3px;top:226.94px;font-size:6.6px;line-height:7.92px;color:#c9c9c9;">MV</span>
<span class="t mb" style="left:1031.8px;top:226.94px;font-size:6.6px;line-height:7.92px;color:#c9c9c9;">%</span>
<span class="t mb" style="left:1018.96px;top:235.6px;font-size:7px;line-height:8.4px;color:#3fa9bb;">45.0</span>
<span class="t m" style="left:1020.36px;top:245px;font-size:6px;line-height:7.2px;color:#70737a;transform:scaleX(0.83);">100.0</span>
<span class="t m" style="left:1026.36px;top:346px;font-size:6px;line-height:7.2px;color:#70737a;transform:scaleX(0.83);">0.0</span>
<div style="left:1006.7px;top:254.8px;width:13.4px;height:89.6px;background:#a3ada9;"></div>
<div style="left:1007.9px;top:255.8px;width:8.4px;height:87.6px;background:#231f20;"></div>
<div style="left:1016.3px;top:255.8px;width:3.2px;height:87.6px;background:#7f9a8c;background-image:repeating-linear-gradient(rgba(255,255,255,.22) 0 1px,transparent 1px 8.76px);"></div>
<div style="left:1008.8px;top:294px;width:6.4px;height:47.6px;background:#1fae5b;"></div>
<svg style="left:996.4px;top:255.200px" width="7" height="5" viewBox="0 0 8 6"><path d="M.5 1h4l3 2-3 2h-4z" fill="#3667b4"/></svg>
<svg style="left:996.4px;top:338px" width="7" height="5" viewBox="0 0 8 6"><path d="M.5 1h4l3 2-3 2h-4z" fill="#3667b4"/></svg>
<svg style="left:1001.7px;top:299.5px" width="5" height="6" viewBox="0 0 6 7"><path d="M.5 .5l5 3-5 3z" fill="#e8323c"/></svg>
<div style="left:1020.5px;top:337.5px;width:2.6px;height:6px;border:1px solid #e3d890;border-left:0;"></div>
<div style="left:1009.73px;top:370.2px;width:6.2px;height:6.2px;background:#1f5e94;transform:rotate(45deg);"></div>
<div style="left:988.7px;top:127.9px;width:1px;height:251.7px;background:rgba(255,255,255,.45);"></div>
<div style="left:1035.96px;top:127.9px;width:1px;height:251.7px;background:#9a9ea6;"></div>
<div style="left:1035.86px;top:163px;width:2.2px;height:79.4px;background:#d9dbe0;"></div>
<span class="t m" style="left:1045.13px;top:129.84px;font-size:7.6px;line-height:9.12px;color:#6c6f76;">TIC2003</span>
<span class="t m" style="left:1039.46px;top:139.12px;font-size:7.8px;line-height:9.36px;color:#6c6f76;">UnitG te</span>
<span class="t m" style="left:1039.46px;top:148.92px;font-size:7.8px;line-height:9.36px;color:#6c6f76;">mp. cntl</span>
<div style="left:1038.16px;top:163.2px;width:46.06px;height:25.2px;background:#231f20;"></div>
<div style="left:1048.56px;top:163.4px;width:6px;height:6px;background:#ee3a3f;"></div>
<span class="t mb" style="left:1038.36px;top:171.62px;font-size:6.3px;line-height:7.56px;color:#3aa0b2;">MAN</span>
<span class="t mb" style="left:1038.36px;top:181.02px;font-size:6.3px;line-height:7.56px;color:#3aa0b2;">LO</span>
<div style="left:1038.16px;top:191.6px;width:46.06px;height:50.6px;background:#231f20;"></div>
<span class="t mb" style="left:1038.56px;top:191.34px;font-size:6.6px;line-height:7.92px;color:#c9c9c9;">PV</span>
<span class="t mb" style="left:1068.18px;top:191.34px;font-size:6.6px;line-height:7.92px;color:#c9c9c9;">DEGC</span>
<span class="t mb" style="left:1067.22px;top:200px;font-size:7px;line-height:8.4px;color:#3fa9bb;">45.0</span>
<span class="t mb" style="left:1038.56px;top:209.14px;font-size:6.6px;line-height:7.92px;color:#c9c9c9;">SV</span>
<span class="t mb" style="left:1068.18px;top:209.14px;font-size:6.6px;line-height:7.92px;color:#c9c9c9;">DEGC</span>
<span class="t mb" style="left:1071.42px;top:217.8px;font-size:7px;line-height:8.4px;color:#3fa9bb;">0.0</span>
<span class="t mb" style="left:1038.56px;top:226.94px;font-size:6.6px;line-height:7.92px;color:#c9c9c9;">MV</span>
<span class="t mb" style="left:1080.06px;top:226.94px;font-size:6.6px;line-height:7.92px;color:#c9c9c9;">%</span>
<span class="t mb" style="left:1071.42px;top:235.6px;font-size:7px;line-height:8.4px;color:#3fa9bb;">0.0</span>
<span class="t m" style="left:1068.62px;top:245px;font-size:6px;line-height:7.2px;color:#70737a;transform:scaleX(0.83);">100.0</span>
<span class="t m" style="left:1074.62px;top:346px;font-size:6px;line-height:7.2px;color:#70737a;transform:scaleX(0.83);">0.0</span>
<div style="left:1054.96px;top:254.8px;width:13.4px;height:89.6px;background:#a3ada9;"></div>
<div style="left:1056.16px;top:255.8px;width:8.4px;height:87.6px;background:#231f20;"></div>
<div style="left:1064.56px;top:255.8px;width:3.2px;height:87.6px;background:#8c9297;background-image:repeating-linear-gradient(rgba(255,255,255,.22) 0 1px,transparent 1px 8.76px);"></div>
<div style="left:1057.06px;top:301.4px;width:6.4px;height:40.2px;background:#ee3340;"></div>
<svg style="left:1044.66px;top:255.200px" width="7" height="5" viewBox="0 0 8 6"><path d="M.5 1h4l3 2-3 2h-4z" fill="#3667b4"/></svg>
<svg style="left:1044.66px;top:338px" width="7" height="5" viewBox="0 0 8 6"><path d="M.5 1h4l3 2-3 2h-4z" fill="#3667b4"/></svg>
<svg style="left:1049.96px;top:337.6px" width="5" height="6" viewBox="0 0 6 7"><path d="M.5 .5l5 3-5 3z" fill="#e8323c"/></svg>
<div style="left:1068.76px;top:337.5px;width:2.6px;height:6px;border:1px solid #e3d890;border-left:0;"></div>
<div style="left:1057.99px;top:370.2px;width:6.2px;height:6.2px;background:#1f5e94;transform:rotate(45deg);"></div>
<div style="left:1036.96px;top:127.9px;width:1px;height:251.7px;background:rgba(255,255,255,.45);"></div>
<div style="left:1084.22px;top:127.9px;width:1px;height:251.7px;background:#9a9ea6;"></div>
<div style="left:1084.12px;top:163px;width:2.2px;height:79.4px;background:#d9dbe0;"></div>
<span class="t m" style="left:1093.39px;top:129.84px;font-size:7.6px;line-height:9.12px;color:#6c6f76;">TIC2004</span>
<span class="t m" style="left:1087.72px;top:139.12px;font-size:7.8px;line-height:9.36px;color:#6c6f76;">UnitH te</span>
<span class="t m" style="left:1087.72px;top:148.92px;font-size:7.8px;line-height:9.36px;color:#6c6f76;">mp. cont</span>
<div style="left:1086.42px;top:163.2px;width:46.06px;height:25.2px;background:#231f20;"></div>
<div style="left:1096.82px;top:163.4px;width:6px;height:6px;background:#22b060;"></div>
<span class="t mb" style="left:1086.62px;top:171.62px;font-size:6.3px;line-height:7.56px;color:#3aa0b2;">MAN</span>
<span class="t mb" style="left:1086.62px;top:181.02px;font-size:6.3px;line-height:7.56px;color:#3aa0b2;">NR</span>
<div style="left:1086.42px;top:191.6px;width:46.06px;height:50.6px;background:#231f20;"></div>
<span class="t mb" style="left:1086.82px;top:191.34px;font-size:6.6px;line-height:7.92px;color:#c9c9c9;">PV</span>
<span class="t mb" style="left:1116.44px;top:191.34px;font-size:6.6px;line-height:7.92px;color:#c9c9c9;">DEGC</span>
<span class="t mb" style="left:1115.48px;top:200px;font-size:7px;line-height:8.4px;color:#3fa9bb;">62.0</span>
<span class="t mb" style="left:1086.82px;top:209.14px;font-size:6.6px;line-height:7.92px;color:#c9c9c9;">SV</span>
<span class="t mb" style="left:1116.44px;top:209.14px;font-size:6.6px;line-height:7.92px;color:#c9c9c9;">DEGC</span>
<span class="t mb" style="left:1119.68px;top:217.8px;font-size:7px;line-height:8.4px;color:#3fa9bb;">0.0</span>
<span class="t mb" style="left:1086.82px;top:226.94px;font-size:6.6px;line-height:7.92px;color:#c9c9c9;">MV</span>
<span class="t mb" style="left:1128.32px;top:226.94px;font-size:6.6px;line-height:7.92px;color:#c9c9c9;">%</span>
<span class="t mb" style="left:1119.68px;top:235.6px;font-size:7px;line-height:8.4px;color:#3fa9bb;">0.0</span>
<span class="t m" style="left:1116.88px;top:245px;font-size:6px;line-height:7.2px;color:#70737a;transform:scaleX(0.83);">100.0</span>
<span class="t m" style="left:1122.88px;top:346px;font-size:6px;line-height:7.2px;color:#70737a;transform:scaleX(0.83);">0.0</span>
<div style="left:1103.22px;top:254.8px;width:13.4px;height:89.6px;background:#a3ada9;"></div>
<div style="left:1104.42px;top:255.8px;width:8.4px;height:87.6px;background:#231f20;"></div>
<div style="left:1112.82px;top:255.8px;width:3.2px;height:87.6px;background:#7f9a8c;background-image:repeating-linear-gradient(rgba(255,255,255,.22) 0 1px,transparent 1px 8.76px);"></div>
<div style="left:1105.32px;top:296.4px;width:6.4px;height:45.2px;background:#1fae5b;"></div>
<svg style="left:1092.92px;top:255.200px" width="7" height="5" viewBox="0 0 8 6"><path d="M.5 1h4l3 2-3 2h-4z" fill="#3667b4"/></svg>
<svg style="left:1092.92px;top:338px" width="7" height="5" viewBox="0 0 8 6"><path d="M.5 1h4l3 2-3 2h-4z" fill="#3667b4"/></svg>
<svg style="left:1098.22px;top:337.6px" width="5" height="6" viewBox="0 0 6 7"><path d="M.5 .5l5 3-5 3z" fill="#e8323c"/></svg>
<div style="left:1117.02px;top:337.5px;width:2.6px;height:6px;border:1px solid #e3d890;border-left:0;"></div>
<div style="left:1106.25px;top:370.2px;width:6.2px;height:6.2px;background:#1f5e94;transform:rotate(45deg);"></div>
<div style="left:1085.22px;top:127.9px;width:1px;height:251.7px;background:rgba(255,255,255,.45);"></div>
<div style="left:1132.48px;top:127.9px;width:1px;height:251.7px;background:#9a9ea6;"></div>
<div style="left:1132.38px;top:163px;width:2.2px;height:79.4px;background:#d9dbe0;"></div>
<!-- p7_boiler -->
<svg style="left:339.400px;top:123.300px" width="373.800" height="259.500" viewBox="339.400 123.300 373.800 259.500"><defs><linearGradient id="tk" x1="0" y1="0" x2="0" y2="1"><stop offset="0" stop-color="#1a8fd8"/><stop offset=".45" stop-color="#8fd8fb"/><stop offset=".6" stop-color="#4ab4ee"/><stop offset="1" stop-color="#1582cc"/></linearGradient><linearGradient id="fu" x1="0" y1="0" x2="1" y2="0"><stop offset="0" stop-color="#d9811a"/><stop offset=".18" stop-color="#f0a136"/><stop offset=".5" stop-color="#f6ae48"/><stop offset=".85" stop-color="#ea9426"/><stop offset="1" stop-color="#cf7a18"/></linearGradient><linearGradient id="bp" x1="0" y1="0" x2="1" y2="0"><stop offset="0" stop-color="#f0a23a"/><stop offset=".6" stop-color="#e89426"/><stop offset="1" stop-color="#c97a1c"/></linearGradient><radialGradient id="hl" cx=".5" cy=".5" r=".5"><stop offset="0" stop-color="#fde3bb" stop-opacity=".95"/><stop offset="1" stop-color="#f6b456" stop-opacity="0"/></radialGradient><radialGradient id="dr" cx=".45" cy=".45" r=".6"><stop offset="0" stop-color="#fafafa"/><stop offset=".5" stop-color="#c4c6c9"/><stop offset="1" stop-color="#7d8186"/></radialGradient><linearGradient id="gt" x1="0" y1="0" x2="1" y2="0"><stop offset="0" stop-color="#6a6e74"/><stop offset=".4" stop-color="#f4f4f5"/><stop offset=".7" stop-color="#b4b7bb"/><stop offset="1" stop-color="#6e7278"/></linearGradient></defs><rect x="339.4" y="123.3" width="373.8" height="259.5" fill="#777d85"/><rect x="349" y="128.900" width="119.600" height="13.600" fill="#82909b" stroke="#9cc4dc" stroke-width=".8" stroke-dasharray="1.500 .7"/><rect x="346" y="279.500" width="99.600" height="55.300" fill="#7b8189" stroke="#a3a8af" stroke-width=".8"/><path d="M346 290.300h99.600" stroke="#a3a8af" stroke-width=".8"/><rect x="346" y="344.600" width="99.600" height="35.800" fill="#7b8189" stroke="#a3a8af" stroke-width=".8"/><path d="M346 355.400h99.600" stroke="#a3a8af" stroke-width=".8"/><rect x="451" y="338.700" width="106.300" height="44.100" fill="#7a8088" stroke="#858b93" stroke-width=".8"/><rect x="451" y="328.400" width="106.300" height="10.300" fill="#8f959d"/><path d="M379 163.600H426V182.400" fill="none" stroke="#2a84c9" stroke-width="2.700" stroke-linejoin="miter"/><path d="M401 163.600V210H426.200V234.500" fill="none" stroke="#2a84c9" stroke-width="2.700" stroke-linejoin="miter"/><path d="M382 182.400H443.200V257.200H536" fill="none" stroke="#2a84c9" stroke-width="2.700" stroke-linejoin="miter"/><path d="M370.500 177V208.300H382" fill="none" stroke="#2a84c9" stroke-width="2.700" stroke-linejoin="miter"/><path d="M382 182.400V236H400M408 234.500H443.200" fill="none" stroke="#2a84c9" stroke-width="2.700" stroke-linejoin="miter"/><path d="M379 163.600H426V182.400" fill="none" stroke="#43a8ee" stroke-width="1.500"/><path d="M401 163.600V210H426.200V234.500" fill="none" stroke="#43a8ee" stroke-width="1.500"/><path d="M382 182.400H443.200V257.200H536" fill="none" stroke="#43a8ee" stroke-width="1.500"/><path d="M370.500 177V208.300H382" fill="none" stroke="#43a8ee" stroke-width="1.500"/><path d="M382 182.400V236H400M408 234.500H443.200" fill="none" stroke="#43a8ee" stroke-width="1.500"/><rect x="349.200" y="150.800" width="19.800" height="6" rx="2.500" fill="url(#tk)" stroke="#1580c8" stroke-width=".8"/><rect x="358.600" y="156.800" width="2.600" height="5.600" fill="#8fd4f8"/><rect x="340.600" y="162.200" width="39" height="15.300" rx="6" fill="url(#tk)" stroke="#1277bf" stroke-width="1"/><path d="M462 289.500H456.200V315.600H619.500V280.200H577" fill="none" stroke="#b39a3e" stroke-width="2.200"/><path d="M487.600 279.200H530.600M487.600 279.200V301.600H518.200V315.600M487.600 293H530.600" fill="none" stroke="#b39a3e" stroke-width="2.200"/><path d="M577 293.100H619.500" fill="none" stroke="#b39a3e" stroke-width="2.200"/><path d="M462 289.500H456.200V315.600H619.500V280.200H577" fill="none" stroke="#ecd061" stroke-width="1.300"/><path d="M487.600 279.200H530.600M487.600 279.200V301.600H518.200V315.600M487.600 293H530.600" fill="none" stroke="#ecd061" stroke-width="1.300"/><path d="M577 293.100H619.500" fill="none" stroke="#ecd061" stroke-width="1.300"/><path d="M507 279.200H530M507 293H530M578 280.200H600M578 293.100H600" stroke="#f4f0dc" stroke-width="1.400" stroke-dasharray="4 3"/><path d="M522 205V188.500H615.300V217.800H656" fill="none" stroke="#dcdee1" stroke-width="1.400"/><path d="M615.300 202H659.500V168.800" fill="none" stroke="#dcdee1" stroke-width="1.400"/><path d="M606 268.200H657.500V288.800H678" fill="none" stroke="#dcdee1" stroke-width="2"/><path d="M530.600 265V319.800H650M576.200 265V319.800" fill="none" stroke="#dcdee1" stroke-width="2"/><path d="M658 318H677" fill="none" stroke="#dcdee1" stroke-width="2"/><path d="M530.600 277V297M576.200 277V297" stroke="#1c1c1e" stroke-width="3.200"/><path d="M535 200.200H607.600V274.400H596.500L582.200 260V233.200H570L561.400 238.800L572.600 246V291Q572 302 562.500 311.600Q554 313.500 545.500 311.600Q536 302 535 291Z" fill="url(#fu)"/><path d="M582.200 200.200H607.600V274.400H596.500L582.200 260Z" fill="url(#bp)"/><ellipse cx="556" cy="262" rx="15" ry="30" fill="url(#hl)"/><rect x="535" y="200.200" width="72.600" height="3" fill="#c0701a"/><path d="M550 210V224M552.7 210V224M555.4 210V224M558.1 210V224M560.8 210V224M563.5 210V224M566.2 210V224M569 210V224M571.5 210V224M579.5 210V224M582.3 210V224M585 210V224M588 210V224M592 210V224M595 210V224M598 210V224M601 210V224" stroke="#f6c684" stroke-width=".9" opacity=".8"/><path d="M549 229.600h6.500M565 229.600h6.500M578 229.600h6.500" stroke="#a64d10" stroke-width="1.800"/><path d="M590 229.600h6.500" stroke="#f2c24a" stroke-width="1.800"/><path d="M575 257.100H590" stroke="#2b8fd0" stroke-width="2.200"/><rect x="588" y="244.600" width="11.500" height="13.500" fill="#c59a90"/><path d="M590.500 244.600v13.500M593.500 244.600v13.500M596.500 244.600v13.500" stroke="#a78078" stroke-width=".8"/><path d="M535.500 204.800H604.200V257" fill="none" stroke="#2580c4" stroke-width="3.200"/><path d="M535.500 204.800H604.200V257" fill="none" stroke="#3aa2e8" stroke-width="1.800"/><path d="M554.500 188.500V209.500M566.900 188.500V209.500M583.600 188.500V209.500M596 188.500V209.500" fill="none" stroke="#dcdee1" stroke-width="1.500"/><path d="M543.500 277.500l5-6 1.500 5.500zM565 277.500l-5-6-1.500 5.500zM543.500 291l5-6 1.500 5.500zM565 291l-5-6-1.500 5.500z" fill="#ee5540" opacity=".85"/><circle cx="528.800" cy="214.800" r="12.300" fill="url(#dr)"/><rect x="462.300" y="280" width="14.500" height="21.400" rx="1.500" fill="url(#gt)"/><ellipse cx="469.600" cy="280" rx="7.200" ry="2.400" fill="#d9dadd" stroke="#8a8d92" stroke-width=".6"/><rect x="649.500" y="153.600" width="43.600" height="15.200" fill="#e9eaec"/><path d="M653 161h8l4-4 4 8 4-8 4 8 4-4h9M653 157.500h6M653 164.500h6M682 159h8v4h-8z" fill="none" stroke="#6b7077" stroke-width="1"/><rect x="551.400" y="137" width="37.300" height="4.300" fill="#8a9098"/><rect x="551.400" y="137" width="24.100" height="4.300" fill="#2b2d9c"/><rect x="551.400" y="153.400" width="37.300" height="4.300" fill="#8a9098"/><rect x="551.400" y="153.400" width="24.100" height="4.300" fill="#f1a933"/><path d="M576 137v4.300M580 137v4.300M584.500 137v4.300M576 153.400v4.300M580 153.400v4.300M584.500 153.400v4.300" stroke="#9fa5ad" stroke-width=".6"/><rect x="678.100" y="254.100" width="8.700" height="38" fill="#f3f3f3"/><rect x="678.100" y="259.5" width="8.700" height="5.500" fill="#ee6a62"/><rect x="678.100" y="270.5" width="8.700" height="5.500" fill="#ee6a62"/><rect x="678.100" y="281.5" width="8.700" height="5.500" fill="#ee6a62"/><rect x="677.300" y="287.500" width="10.300" height="4.600" fill="#c9cbce"/><path d="M661.500 288.800h14" stroke="#fff" stroke-width="2.600"/><path d="M676 316.500l4-4h29v7.800h-29z" fill="#1a1a1c"/><rect x="640.2" y="264.3" width="8.600" height="8.200" fill="#159447"/><path d="M641.9 266.2v4.400l5.200-4.400v4.400z" fill="#fff"/><rect x="650" y="315.8" width="8.600" height="8.200" fill="#159447"/><path d="M651.7 317.7v4.400l5.200-4.400v4.400z" fill="#fff"/><rect x="408.500" y="181.800" width="9.500" height="9.400" rx="1.500" fill="#159447"/><path d="M410.300 184.300v4.400l5.800-4.400v4.400z" fill="#fff"/><circle cx="403.800" cy="238" r="4.700" fill="#159447"/><path d="M400.300 234.600v4.600l3.500-2.300z" fill="#fff"/><path d="M407.300 234.600v4.600l-3.500-2.300z" fill="#111"/><path d="M622.500 271l5-6M632 323l5-6.500" stroke="#0f7f70" stroke-width="2"/><path d="M407.2 158.6v5.1L413.6 158.6v5.1z" fill="#14a04a"/><path d="M410.4 161.2v-2.9" stroke="#14a04a" stroke-width="1.2"/><path d="M408.2 158.2h4.5" stroke="#14a04a" stroke-width="1.6"/><path d="M429.9 177.6v5.1L436.3 177.6v5.1z" fill="#14a04a"/><path d="M433.1 180.2v-2.9" stroke="#14a04a" stroke-width="1.2"/><path d="M430.9 177.2h4.5" stroke="#14a04a" stroke-width="1.6"/><path d="M413.5 205.4v5.1L419.9 205.4v5.1z" fill="#14a04a"/><path d="M416.7 208.0v-2.9" stroke="#14a04a" stroke-width="1.2"/><path d="M414.5 205.0h4.5" stroke="#14a04a" stroke-width="1.6"/><path d="M431.2 229.4v5.1L437.6 229.4v5.1z" fill="#14a04a"/><path d="M434.4 232.0v-2.9" stroke="#14a04a" stroke-width="1.2"/><path d="M432.2 229.0h4.5" stroke="#14a04a" stroke-width="1.6"/><path d="M634.3 199.4v5.1L640.7 199.4v5.1z" fill="#14a04a"/><path d="M637.5 202.0v-2.9" stroke="#14a04a" stroke-width="1.2"/><path d="M635.3 199.0h4.5" stroke="#14a04a" stroke-width="1.6"/><path d="M634.3 215.2v5.1L640.7 215.2v5.1z" fill="#14a04a"/><path d="M637.5 217.8v-2.9" stroke="#14a04a" stroke-width="1.2"/><path d="M635.3 214.8h4.5" stroke="#14a04a" stroke-width="1.6"/><path d="M483.1 313.0v5.1L489.5 313.0v5.1z" fill="#14a04a"/><path d="M486.3 315.6v-2.9" stroke="#14a04a" stroke-width="1.2"/><path d="M484.1 312.6h4.5" stroke="#14a04a" stroke-width="1.6"/><path d="M499.8 313.0v5.1L506.2 313.0v5.1z" fill="#14a04a"/><path d="M503.0 315.6v-2.9" stroke="#14a04a" stroke-width="1.2"/><path d="M500.8 312.6h4.5" stroke="#14a04a" stroke-width="1.6"/><path d="M496.5 276.6v5.1L502.9 276.6v5.1z" fill="#14a04a"/><path d="M499.7 279.2v-2.9" stroke="#14a04a" stroke-width="1.2"/><path d="M497.5 276.2h4.5" stroke="#14a04a" stroke-width="1.6"/><path d="M514.6 276.6v5.1L521.0 276.6v5.1z" fill="#14a04a"/><path d="M517.8 279.2v-2.9" stroke="#14a04a" stroke-width="1.2"/><path d="M515.6 276.2h4.5" stroke="#14a04a" stroke-width="1.6"/><path d="M496.5 290.4v5.1L502.9 290.4v5.1z" fill="#14a04a"/><path d="M499.7 293.0v-2.9" stroke="#14a04a" stroke-width="1.2"/><path d="M497.5 290.0h4.5" stroke="#14a04a" stroke-width="1.6"/><path d="M514.6 290.4v5.1L521.0 290.4v5.1z" fill="#14a04a"/><path d="M517.8 293.0v-2.9" stroke="#14a04a" stroke-width="1.2"/><path d="M515.6 290.0h4.5" stroke="#14a04a" stroke-width="1.6"/><path d="M587.1 277.6v5.1L593.5 277.6v5.1z" fill="#14a04a"/><path d="M590.3 280.2v-2.9" stroke="#14a04a" stroke-width="1.2"/><path d="M588.1 277.2h4.5" stroke="#14a04a" stroke-width="1.6"/><path d="M602.2 277.6v5.1L608.6 277.6v5.1z" fill="#14a04a"/><path d="M605.4 280.2v-2.9" stroke="#14a04a" stroke-width="1.2"/><path d="M603.2 277.2h4.5" stroke="#14a04a" stroke-width="1.6"/><path d="M587.1 290.5v5.1L593.5 290.5v5.1z" fill="#14a04a"/><path d="M590.3 293.1v-2.9" stroke="#14a04a" stroke-width="1.2"/><path d="M588.1 290.1h4.5" stroke="#14a04a" stroke-width="1.6"/><path d="M602.2 290.5v5.1L608.6 290.5v5.1z" fill="#14a04a"/><path d="M605.4 293.1v-2.9" stroke="#14a04a" stroke-width="1.2"/><path d="M603.2 290.1h4.5" stroke="#14a04a" stroke-width="1.6"/><path d="M486.3 254.2v5.1L492.7 254.2v5.1z" fill="#14a04a"/><path d="M489.5 256.8v-2.9" stroke="#14a04a" stroke-width="1.2"/><path d="M487.3 253.8h4.5" stroke="#14a04a" stroke-width="1.6"/><path d="M465.6 313.0v5.1L472.0 313.0v5.1z" fill="#e63a3a"/><path d="M468.8 315.6v-2.9" stroke="#e63a3a" stroke-width="1.2"/><path d="M466.6 312.6h4.5" stroke="#e63a3a" stroke-width="1.6"/><path d="M441.8 240.1h5.1L441.8 246.5h5.1z" fill="#14a04a"/><path d="M444.4 243.3v-2.9" stroke="#14a04a" stroke-width="1.2"/><path d="M442.2 240.3h4.5" stroke="#14a04a" stroke-width="1.6"/><path d="M656.9 180.8h5.1L656.9 187.2h5.1z" fill="#14a04a"/><path d="M659.5 184.0v-2.9" stroke="#14a04a" stroke-width="1.2"/><path d="M657.3 181.0h4.5" stroke="#14a04a" stroke-width="1.6"/><path d="M519.4 230.3h5.1L519.4 236.7h5.1z" fill="#14904a"/><path d="M522.0 233.5v-2.9" stroke="#14904a" stroke-width="1.2"/><path d="M519.8 230.5h4.5" stroke="#14904a" stroke-width="1.6"/><path d="M661 183l8-5.500" stroke="#14a04a" stroke-width="2.400"/><circle cx="464" cy="247" r="2.800" fill="none" stroke="#dfe1e4" stroke-width="1"/><path d="M462.300 253.600v7M465.900 253.600v7" stroke="#e6e7ea" stroke-width="1.300"/><rect x="473.500" y="239" width="7.500" height="6.800" fill="#f1eaa6"/><path d="M474.500 244.500l5.500-4.500" stroke="#fff" stroke-width="1"/></svg>
<span class="t s" style="left:350.6px;top:128.84px;font-size:11.6px;line-height:13.92px;color:#9ccbe6;transform:scaleX(1.07);-webkit-text-stroke:.3px #9ccbe6;">BOILER OVERVIEW</span>
<span class="t sb" style="left:473.5px;top:135.34px;font-size:5.6px;line-height:6.72px;color:#ec4a3f;transform:scaleX(0.94);">START FINISHED</span>
<span class="t sb" style="left:348px;top:142.76px;font-size:5.4px;line-height:6.48px;color:#eef0f2;transform:scaleX(0.91);">Deaerator</span>
<span class="t sb" style="left:408.1px;top:173.76px;font-size:5.4px;line-height:6.48px;color:#eef0f2;transform:scaleX(0.8);">BFP1</span>
<span class="t sb" style="left:399.9px;top:224.96px;font-size:5.4px;line-height:6.48px;color:#eef0f2;transform:scaleX(0.8);">BFP2</span>
<span class="t sb" style="left:420.5px;top:184.38px;font-size:5.2px;line-height:6.24px;color:#2fb35e;transform:scaleX(0.97);">0.0</span>
<span class="t sb" style="left:411px;top:236.38px;font-size:5.2px;line-height:6.24px;color:#2fb35e;transform:scaleX(0.97);">0.0</span>
<span class="t sb" style="left:445.7px;top:207.36px;font-size:5.4px;line-height:6.48px;color:#eef0f2;transform:scaleX(0.88);">Feed Water</span>
<span class="t sb" style="left:486.2px;top:198.16px;font-size:5.4px;line-height:6.48px;color:#eef0f2;transform:scaleX(0.85);">Drum Level 1</span>
<span class="t sb" style="left:504px;top:204.76px;font-size:5.4px;line-height:6.48px;color:#eef0f2;transform:scaleX(0.73);">mm</span>
<span class="t sb" style="left:495px;top:204.76px;font-size:5.4px;line-height:6.48px;color:#2fb35e;transform:scaleX(0.93);">0.0</span>
<span class="t sb" style="left:486.2px;top:213.76px;font-size:5.4px;line-height:6.48px;color:#eef0f2;transform:scaleX(0.85);">Drum Level 2</span>
<span class="t sb" style="left:504px;top:220.46px;font-size:5.4px;line-height:6.48px;color:#eef0f2;transform:scaleX(0.73);">mm</span>
<span class="t sb" style="left:495px;top:220.46px;font-size:5.4px;line-height:6.48px;color:#2fb35e;transform:scaleX(0.93);">0.0</span>
<span class="t sb" style="left:483px;top:242.26px;font-size:5.4px;line-height:6.48px;color:#eef0f2;transform:scaleX(0.8);">FI210</span>
<span class="t sb" style="left:512.5px;top:249.06px;font-size:5.4px;line-height:6.48px;color:#eef0f2;transform:scaleX(0.91);">t/h</span>
<span class="t sb" style="left:496px;top:249.06px;font-size:5.4px;line-height:6.48px;color:#2fb35e;transform:scaleX(1.07);">0.0</span>
<span class="t sb" style="left:521px;top:236.96px;font-size:5.4px;line-height:6.48px;color:#eef0f2;transform:scaleX(0.72);">FI300</span>
<span class="t sb" style="left:514.5px;top:236.96px;font-size:5.4px;line-height:6.48px;color:#eef0f2;transform:scaleX(0.83);">%</span>
<span class="t sb" style="left:503px;top:233.26px;font-size:5.4px;line-height:6.48px;color:#2fb35e;transform:scaleX(1.07);">0.0</span>
<span class="t sb" style="left:466px;top:262.16px;font-size:5.4px;line-height:6.48px;color:#2fb35e;transform:scaleX(0.93);">0.0</span>
<span class="t sb" style="left:475.5px;top:262.16px;font-size:5.4px;line-height:6.48px;color:#eef0f2;transform:scaleX(0.91);">t/h</span>
<span class="t sb" style="left:486px;top:262.16px;font-size:5.4px;line-height:6.48px;color:#2fb35e;transform:scaleX(0.93);">0.0</span>
<span class="t sb" style="left:497px;top:262.16px;font-size:5.4px;line-height:6.48px;color:#eef0f2;transform:scaleX(0.83);">%</span>
<span class="t sb" style="left:459px;top:270.76px;font-size:5.4px;line-height:6.48px;color:#eef0f2;transform:scaleX(0.92);">Gas Tank</span>
<span class="t sb" style="left:468px;top:318.26px;font-size:5.4px;line-height:6.48px;color:#2fb35e;transform:scaleX(0.93);">0.0</span>
<span class="t sb" style="left:476.5px;top:318.26px;font-size:5.4px;line-height:6.48px;color:#eef0f2;transform:scaleX(0.83);">%</span>
<span class="t sb" style="left:551.4px;top:128.96px;font-size:5.4px;line-height:6.48px;color:#eef0f2;transform:scaleX(0.86);">Furnace Purge Timer</span>
<span class="t sb" style="left:593.5px;top:136.56px;font-size:5.4px;line-height:6.48px;color:#eef0f2;transform:scaleX(0.91);">5Sec</span>
<span class="t sb" style="left:551.4px;top:142.1px;font-size:4.5px;line-height:5.4px;color:#eef0f2;">0</span>
<span class="t sb" style="left:551.4px;top:146.06px;font-size:5.4px;line-height:6.48px;color:#eef0f2;transform:scaleX(0.87);">Fuel Leak Check</span>
<span class="t sb" style="left:593.5px;top:152.76px;font-size:5.4px;line-height:6.48px;color:#eef0f2;transform:scaleX(0.91);">0Sec</span>
<span class="t sb" style="left:551.4px;top:158.3px;font-size:4.5px;line-height:5.4px;color:#eef0f2;">0</span>
<span class="t sb" style="left:541.3px;top:165.96px;font-size:5.4px;line-height:6.48px;color:#eef0f2;transform:scaleX(0.85);">Steam Flow</span>
<span class="t sb" style="left:583px;top:165.96px;font-size:5.4px;line-height:6.48px;color:#2fb35e;transform:scaleX(0.93);">0.0</span>
<span class="t sb" style="left:593.5px;top:165.96px;font-size:5.4px;line-height:6.48px;color:#eef0f2;transform:scaleX(0.98);">t/h</span>
<span class="t sb" style="left:541.3px;top:173.06px;font-size:5.4px;line-height:6.48px;color:#eef0f2;transform:scaleX(0.85);">Steam Temp</span>
<span class="t sb" style="left:583px;top:173.06px;font-size:5.4px;line-height:6.48px;color:#2fb35e;transform:scaleX(0.93);">0.0</span>
<span class="t sb" style="left:593.5px;top:173.06px;font-size:5.4px;line-height:6.48px;color:#eef0f2;transform:scaleX(0.85);">degC</span>
<span class="t sb" style="left:541.3px;top:180.76px;font-size:5.4px;line-height:6.48px;color:#eef0f2;transform:scaleX(0.88);">Steam Press</span>
<span class="t sb" style="left:583px;top:180.76px;font-size:5.4px;line-height:6.48px;color:#2fb35e;transform:scaleX(0.93);">0.0</span>
<span class="t sb" style="left:593.5px;top:180.76px;font-size:5.4px;line-height:6.48px;color:#eef0f2;transform:scaleX(0.86);">MPa</span>
<span class="t sb" style="left:650.4px;top:145.38px;font-size:5.2px;line-height:6.24px;color:#eef0f2;transform:scaleX(0.92);">STEAM TURBINE</span>
<span class="t sb" style="left:664px;top:184.26px;font-size:5.4px;line-height:6.48px;color:#2fb35e;transform:scaleX(0.93);">0.0</span>
<span class="t sb" style="left:676px;top:188.36px;font-size:5.4px;line-height:6.48px;color:#2fb35e;transform:scaleX(0.93);">0.0</span>
<span class="t sb" style="left:684px;top:188.36px;font-size:5.4px;line-height:6.48px;color:#eef0f2;transform:scaleX(0.83);">%</span>
<span class="t sb" style="left:661.8px;top:214.66px;font-size:5.4px;line-height:6.48px;color:#eef0f2;transform:scaleX(0.87);">Turbine by-pass</span>
<span class="t sb" style="left:633.3px;top:235.76px;font-size:5.4px;line-height:6.48px;color:#eef0f2;transform:scaleX(0.83);">kPa</span>
<span class="t sb" style="left:610.2px;top:241.56px;font-size:5.4px;line-height:6.48px;color:#eef0f2;transform:scaleX(0.85);">Furnace Press</span>
<span class="t sb" style="left:642.2px;top:256.26px;font-size:5.4px;line-height:6.48px;color:#eef0f2;transform:scaleX(0.92);">IDF</span>
<span class="t sb" style="left:634px;top:274.96px;font-size:5.4px;line-height:6.48px;color:#2fb35e;transform:scaleX(0.87);">0.0</span>
<span class="t sb" style="left:641.5px;top:274.96px;font-size:5.4px;line-height:6.48px;color:#eef0f2;transform:scaleX(0.83);">%</span>
<span class="t sb" style="left:661.8px;top:278.06px;font-size:5.4px;line-height:6.48px;color:#eef0f2;transform:scaleX(0.88);">FGD</span>
<span class="t sb" style="left:649.7px;top:308.36px;font-size:5.4px;line-height:6.48px;color:#eef0f2;transform:scaleX(0.86);">FDF</span>
<span class="t sb" style="left:640px;top:325.76px;font-size:5.4px;line-height:6.48px;color:#2fb35e;transform:scaleX(0.87);">0.0</span>
<span class="t sb" style="left:648px;top:325.76px;font-size:5.4px;line-height:6.48px;color:#eef0f2;transform:scaleX(0.83);">%</span>
<span class="t sb" style="left:677.5px;top:313.14px;font-size:5.6px;line-height:6.72px;color:#eef0f2;transform:scaleX(0.92);">AIR INTAKE</span>
<span class="t sb" style="left:575px;top:324.76px;font-size:5.4px;line-height:6.48px;color:#eef0f2;transform:scaleX(0.82);">Total Air</span>
<span class="t sb" style="left:605px;top:324.76px;font-size:5.4px;line-height:6.48px;color:#2fb35e;transform:scaleX(0.93);">0.0</span>
<span class="t sb" style="left:612.5px;top:324.76px;font-size:5.4px;line-height:6.48px;color:#eef0f2;transform:scaleX(0.98);">t/h</span>
<span class="t sb" style="left:369.1px;top:281.76px;font-size:5.4px;line-height:6.48px;color:#eef0f2;transform:scaleX(0.91);">BOILER CONDITIONS</span>
<span class="t sb" style="left:349.5px;top:290.96px;font-size:5.4px;line-height:6.48px;color:#eef0f2;transform:scaleX(0.9);">Steam Flow</span>
<span class="t sb" style="left:418.5px;top:290.96px;font-size:5.4px;line-height:6.48px;color:#2fb35e;transform:scaleX(0.93);">0.0</span>
<span class="t sb" style="left:427.3px;top:290.96px;font-size:5.4px;line-height:6.48px;color:#eef0f2;transform:scaleX(0.98);">t/h</span>
<span class="t sb" style="left:349.5px;top:298.18px;font-size:5.4px;line-height:6.48px;color:#eef0f2;transform:scaleX(0.9);">Steam Temp</span>
<span class="t sb" style="left:418.5px;top:298.18px;font-size:5.4px;line-height:6.48px;color:#2fb35e;transform:scaleX(0.93);">0.0</span>
<span class="t sb" style="left:427.3px;top:298.18px;font-size:5.4px;line-height:6.48px;color:#eef0f2;transform:scaleX(0.85);">degC</span>
<span class="t sb" style="left:349.5px;top:305.4px;font-size:5.4px;line-height:6.48px;color:#eef0f2;transform:scaleX(0.9);">Steam  Press</span>
<span class="t sb" style="left:418.5px;top:305.4px;font-size:5.4px;line-height:6.48px;color:#2fb35e;transform:scaleX(0.93);">0.0</span>
<span class="t sb" style="left:427.3px;top:305.4px;font-size:5.4px;line-height:6.48px;color:#eef0f2;transform:scaleX(0.86);">MPa</span>
<span class="t sb" style="left:349.5px;top:312.62px;font-size:5.4px;line-height:6.48px;color:#eef0f2;transform:scaleX(0.83);">Drum Level 1</span>
<span class="t sb" style="left:418.5px;top:312.62px;font-size:5.4px;line-height:6.48px;color:#2fb35e;transform:scaleX(0.93);">0.0</span>
<span class="t sb" style="left:427.3px;top:312.62px;font-size:5.4px;line-height:6.48px;color:#eef0f2;transform:scaleX(0.73);">mm</span>
<span class="t sb" style="left:349.5px;top:319.84px;font-size:5.4px;line-height:6.48px;color:#eef0f2;transform:scaleX(0.91);">Drum Level 2(FT)</span>
<span class="t sb" style="left:418.5px;top:319.84px;font-size:5.4px;line-height:6.48px;color:#2fb35e;transform:scaleX(0.93);">0.0</span>
<span class="t sb" style="left:427.3px;top:319.84px;font-size:5.4px;line-height:6.48px;color:#eef0f2;transform:scaleX(0.73);">mm</span>
<span class="t sb" style="left:349.5px;top:327.06px;font-size:5.4px;line-height:6.48px;color:#eef0f2;transform:scaleX(0.9);">Feed Water</span>
<span class="t sb" style="left:418.5px;top:327.06px;font-size:5.4px;line-height:6.48px;color:#2fb35e;transform:scaleX(0.93);">0.0</span>
<span class="t sb" style="left:427.3px;top:327.06px;font-size:5.4px;line-height:6.48px;color:#eef0f2;transform:scaleX(0.98);">t/h</span>
<span class="t sb" style="left:366.35px;top:346.56px;font-size:5.4px;line-height:6.48px;color:#eef0f2;transform:scaleX(0.91);">FURNACE CONDITIONS</span>
<span class="t sb" style="left:349.5px;top:356.86px;font-size:5.4px;line-height:6.48px;color:#eef0f2;transform:scaleX(0.87);">Furnace Press</span>
<span class="t sb" style="left:418.5px;top:356.86px;font-size:5.4px;line-height:6.48px;color:#2fb35e;transform:scaleX(0.93);">0.0</span>
<span class="t sb" style="left:427.3px;top:356.86px;font-size:5.4px;line-height:6.48px;color:#eef0f2;transform:scaleX(0.89);">kPa</span>
<span class="t sb" style="left:349.5px;top:364.46px;font-size:5.4px;line-height:6.48px;color:#eef0f2;transform:scaleX(0.86);">Fuel Flow</span>
<span class="t sb" style="left:418.5px;top:364.46px;font-size:5.4px;line-height:6.48px;color:#2fb35e;transform:scaleX(0.93);">0.0</span>
<span class="t sb" style="left:427.3px;top:364.46px;font-size:5.4px;line-height:6.48px;color:#eef0f2;transform:scaleX(0.98);">t/h</span>
<span class="t sb" style="left:349.5px;top:372.06px;font-size:5.4px;line-height:6.48px;color:#eef0f2;transform:scaleX(0.89);">Total Air</span>
<span class="t sb" style="left:418.5px;top:372.06px;font-size:5.4px;line-height:6.48px;color:#2fb35e;transform:scaleX(0.93);">0.0</span>
<span class="t sb" style="left:427.3px;top:372.06px;font-size:5.4px;line-height:6.48px;color:#eef0f2;transform:scaleX(0.98);">t/h</span>
<span class="t sb" style="left:476px;top:330.36px;font-size:5.4px;line-height:6.48px;color:#eef0f2;transform:scaleX(0.88);">Operator Guide Message</span>
<span class="t sb" style="left:453px;top:340.3px;font-size:5px;line-height:6px;color:#e8463c;transform:scaleX(1.17);">0003 09:23:24</span>
<span class="t sb" style="left:460px;top:344.8px;font-size:5px;line-height:6px;color:#e8463c;transform:scaleX(0.8);">Please Start Furnace Purge</span>
</div>
<!-- p9_label -->
<div style="left:8px;top:721.5px;width:1150px;height:1px;background:#d9dbdd;"></div>
<span class="t s" style="left:1151.9px;top:727.38px;font-size:14.2px;line-height:17.04px;color:#0c0c0c;">F0100</span>
</div></body></html>
